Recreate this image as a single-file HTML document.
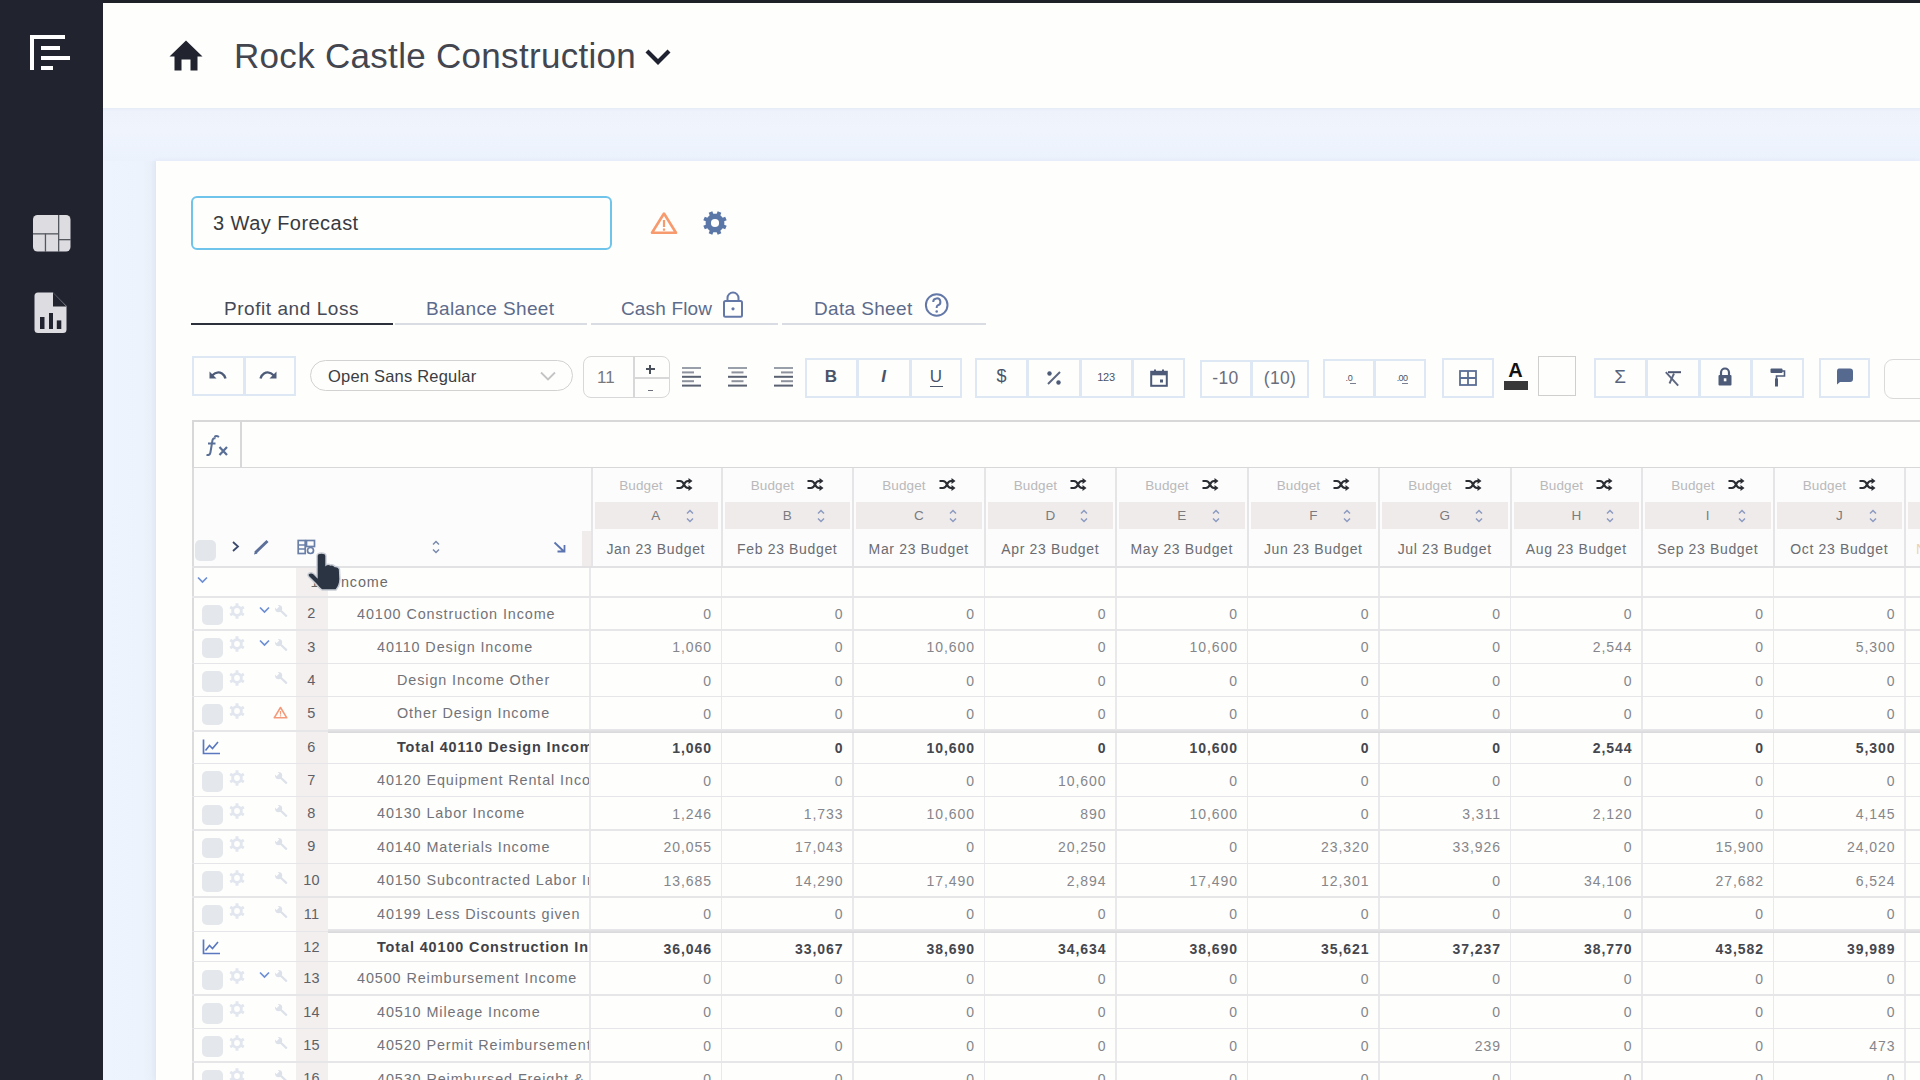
<!DOCTYPE html>
<html><head><meta charset="utf-8"><style>
html,body{margin:0;padding:0;}
body{width:1920px;height:1080px;overflow:hidden;position:relative;background:#fefefd;font-family:"Liberation Sans", sans-serif;}
div{box-sizing:border-box;}
</style></head><body>
<div style="position:absolute;left:0px;top:0px;width:1920px;height:1080px;background:#fefefd"></div><div style="position:absolute;left:103px;top:108px;width:1817px;height:53px;background:linear-gradient(#e6ecf6 0,#edf2fb 3px,#eff4fd 40%,#ecf2fc 100%)"></div><div style="position:absolute;left:103px;top:161px;width:53px;height:919px;background:linear-gradient(90deg,#eef4fd 0,#edf3fc 75%,#e8eef8 100%)"></div><div style="position:absolute;left:103px;top:3px;width:1817px;height:105px;background:#fefefd"></div><div style="position:absolute;left:0px;top:0px;width:1920px;height:3px;background:#1e2127"></div><div style="position:absolute;left:0px;top:0px;width:103px;height:1080px;background:#21232f"></div><div style="position:absolute;left:30px;top:35px;width:4px;height:35px;background:#fff"></div><div style="position:absolute;left:30px;top:35px;width:35px;height:4px;background:#fff"></div><div style="position:absolute;left:41px;top:46px;width:19px;height:4px;background:#fff"></div><div style="position:absolute;left:41px;top:56px;width:29px;height:4px;background:#fff"></div><div style="position:absolute;left:41px;top:66px;width:12px;height:4px;background:#fff"></div><svg style="position:absolute;left:33px;top:215px" width="38" height="37" viewBox="0 0 38 37"><rect x="0" y="0" width="37.5" height="36.5" rx="4.5" fill="#dcdce1"/><rect x="25" y="0" width="1.3" height="37" fill="#55575f"/><rect x="0" y="18.2" width="25.5" height="1.3" fill="#55575f"/><rect x="25.5" y="24" width="13" height="1.3" fill="#55575f"/><rect x="11.8" y="18.5" width="1.3" height="19" fill="#55575f"/></svg><svg style="position:absolute;left:34px;top:292px" width="34" height="42" viewBox="0 0 34 42"><path d="M4 0.5 H19 L32.5 14 V37.5 Q32.5 41 29 41 H4 Q0.5 41 0.5 37.5 V4 Q0.5 0.5 4 0.5Z" fill="#dcdce1"/><path d="M19 0.5 V14.5 H32.5Z" fill="#21232f"/><rect x="6" y="25" width="4.5" height="12" fill="#21232f"/><rect x="15" y="21" width="4" height="16" fill="#21232f"/><rect x="22.8" y="28.4" width="4.5" height="8.6" fill="#21232f"/></svg><svg style="position:absolute;left:169px;top:40px" width="34" height="31" viewBox="0 0 34 31"><path d="M17 0.5 L33.5 16.5 H28.5 V30.5 H21.5 V19.5 H12.5 V30.5 H5.5 V16.5 H0.5Z" fill="#21232f"/></svg><div style="position:absolute;top:35.37px;font-size:35px;line-height:42.0px;color:#43464f;font-weight:400;letter-spacing:0.3px;white-space:nowrap;left:234px;">Rock Castle Construction</div><svg style="position:absolute;left:644px;top:48px" width="28" height="18" viewBox="0 0 28 18"><path d="M3 3 L14 14 L25 3" fill="none" stroke="#1f2230" stroke-width="4.2"/></svg><div style="position:absolute;left:156px;top:161px;width:1764px;height:919px;background:#fefefd;box-shadow:-1px 0 4px rgba(170,190,220,0.18)"></div><div style="position:absolute;left:191px;top:196px;width:421px;height:54px;border:2px solid #6fc4ec;border-radius:6px;background:#fefefd"></div><div style="position:absolute;top:210.67px;font-size:20px;line-height:24.0px;color:#383a40;font-weight:400;letter-spacing:0.45px;white-space:nowrap;left:213px;">3 Way Forecast</div><svg style="position:absolute;left:650px;top:211px" width="28" height="24" viewBox="0 0 28 24"><path d="M14 2.5 L26 21.8 H2Z" fill="none" stroke="#f79a6e" stroke-width="2.6" stroke-linejoin="round"/><rect x="12.9" y="9" width="2.2" height="7" fill="#f79a6e"/><rect x="12.9" y="17.5" width="2.2" height="2.2" fill="#f79a6e"/></svg><svg style="position:absolute;left:702.5px;top:210.5px" width="24" height="24" viewBox="0 0 24 24"><path d="M21.36 12.00 L21.21 13.68 L23.69 14.71 L22.18 18.35 L19.70 17.32 L18.62 18.62 L17.32 19.70 L18.35 22.18 L14.71 23.69 L13.68 21.21 L12.00 21.36 L10.32 21.21 L9.29 23.69 L5.65 22.18 L6.68 19.70 L5.38 18.62 L4.30 17.32 L1.82 18.35 L0.31 14.71 L2.79 13.68 L2.64 12.00 L2.79 10.32 L0.31 9.29 L1.82 5.65 L4.30 6.68 L5.38 5.38 L6.68 4.30 L5.65 1.82 L9.29 0.31 L10.32 2.79 L12.00 2.64 L13.68 2.79 L14.71 0.31 L18.35 1.82 L17.32 4.30 L18.62 5.38 L19.70 6.68 L22.18 5.65 L23.69 9.29 L21.21 10.32Z" fill="#5b77a8"/><circle cx="12.0" cy="12.0" r="4.08" fill="#fefefd"/></svg><div style="position:absolute;top:298.22px;font-size:19px;line-height:22.8px;color:#474a55;font-weight:400;letter-spacing:0.55px;white-space:nowrap;left:224px;">Profit and Loss</div><div style="position:absolute;top:298.22px;font-size:19px;line-height:22.8px;color:#5d6b8b;font-weight:400;letter-spacing:0.37px;white-space:nowrap;left:426px;">Balance Sheet</div><div style="position:absolute;top:298.22px;font-size:19px;line-height:22.8px;color:#5d6b8b;font-weight:400;letter-spacing:0.15px;white-space:nowrap;left:621px;">Cash Flow</div><div style="position:absolute;top:298.22px;font-size:19px;line-height:22.8px;color:#5d6b8b;font-weight:400;letter-spacing:0.35px;white-space:nowrap;left:814px;">Data Sheet</div><div style="position:absolute;left:191px;top:322.5px;width:202px;height:2.2px;background:#2c303b"></div><div style="position:absolute;left:395px;top:323px;width:192px;height:1.5px;background:#d9dce2"></div><div style="position:absolute;left:591px;top:323px;width:187px;height:1.5px;background:#d9dce2"></div><div style="position:absolute;left:782px;top:323px;width:204px;height:1.5px;background:#d9dce2"></div><svg style="position:absolute;left:722px;top:291px" width="22" height="27" viewBox="0 0 22 27"><path d="M5.5 10 V7 A5.5 5.5 0 0 1 16.5 7 V10" fill="none" stroke="#6478a8" stroke-width="2"/><rect x="2" y="10" width="18" height="15.8" rx="1.5" fill="none" stroke="#6478a8" stroke-width="2"/><circle cx="11" cy="17.8" r="1.6" fill="#6478a8"/></svg><svg style="position:absolute;left:924px;top:292px" width="26" height="26" viewBox="0 0 26 26"><circle cx="12.7" cy="13" r="10.8" fill="none" stroke="#6478a8" stroke-width="2"/><path d="M9.2 10 A3.6 3.6 0 1 1 13.5 13.5 Q12.7 14 12.7 15.5 V16" fill="none" stroke="#6478a8" stroke-width="2"/><circle cx="12.7" cy="19.5" r="1.3" fill="#6478a8"/></svg><div style="position:absolute;left:192px;top:356px;width:104px;height:40px;border:2px solid #dee7f4;background:#fefefd"></div><div style="position:absolute;left:242.5px;top:356px;width:3px;height:40px;background:#dee7f4"></div><svg style="position:absolute;left:206px;top:366px" width="22" height="20" viewBox="0 0 22 20"><path d="M6 9.5 Q11 4.5 16 7.5 Q18.5 9 19.5 12.5" fill="none" stroke="#4d5b78" stroke-width="2.4"/><path d="M3.5 5.5 V12.5 H10.5Z" fill="#4d5b78"/></svg><svg style="position:absolute;left:258px;top:366px" width="22" height="20" viewBox="0 0 22 20"><path d="M16 9.5 Q11 4.5 6 7.5 Q3.5 9 2.5 12.5" fill="none" stroke="#4d5b78" stroke-width="2.4"/><path d="M18.5 5.5 V12.5 H11.5Z" fill="#4d5b78"/></svg><div style="position:absolute;left:310px;top:359.5px;width:263px;height:31.5px;border:1.6px solid #d2d2d2;border-radius:16px;background:#fefefd"></div><div style="position:absolute;top:366.98px;font-size:16.5px;line-height:19.8px;color:#3b3d42;font-weight:400;letter-spacing:0.2px;white-space:nowrap;left:328px;">Open Sans Regular</div><svg style="position:absolute;left:539px;top:370px" width="18" height="12" viewBox="0 0 18 12"><path d="M2 2.5 L9 9.5 L16 2.5" fill="none" stroke="#c4c4c4" stroke-width="1.8"/></svg><div style="position:absolute;left:582.5px;top:356px;width:87px;height:41.5px;border:1.6px solid #d8d8d8;border-radius:8px;background:#fefefd"></div><div style="position:absolute;left:633px;top:356px;width:1.6px;height:41.5px;background:#d8d8d8"></div><div style="position:absolute;left:633.5px;top:377px;width:36px;height:1.6px;background:#d8d8d8"></div><div style="position:absolute;top:367.71px;font-size:17px;line-height:20.4px;color:#77787c;font-weight:400;letter-spacing:0px;white-space:nowrap;left:597px;">11</div><div style="position:absolute;left:645.5px;top:368.2px;width:9px;height:1.6px;background:#4a4f5c"></div><div style="position:absolute;left:649.2px;top:364.5px;width:1.6px;height:9px;background:#4a4f5c"></div><div style="position:absolute;left:647.5px;top:389.5px;width:5px;height:1.6px;background:#6a6f7a"></div><svg style="position:absolute;left:682px;top:366.5px" width="19" height="20" viewBox="0 0 19 20"><rect x="0" y="0.0" width="19" height="2" fill="#9aa0aa"/><rect x="0" y="4.4" width="12" height="2" fill="#8d929c"/><rect x="0" y="8.8" width="19" height="2" fill="#5a6170"/><rect x="0" y="13.200000000000001" width="12" height="2" fill="#8d929c"/><rect x="0" y="17.6" width="19" height="2" fill="#5a6170"/></svg><svg style="position:absolute;left:727.5px;top:366.5px" width="19" height="20" viewBox="0 0 19 20"><rect x="0.0" y="0.0" width="19" height="2" fill="#9aa0aa"/><rect x="3.5" y="4.4" width="12" height="2" fill="#8d929c"/><rect x="0.0" y="8.8" width="19" height="2" fill="#5a6170"/><rect x="3.5" y="13.200000000000001" width="12" height="2" fill="#8d929c"/><rect x="0.0" y="17.6" width="19" height="2" fill="#5a6170"/></svg><svg style="position:absolute;left:773.5px;top:366.5px" width="19" height="20" viewBox="0 0 19 20"><rect x="0" y="0.0" width="19" height="2" fill="#9aa0aa"/><rect x="7" y="4.4" width="12" height="2" fill="#8d929c"/><rect x="0" y="8.8" width="19" height="2" fill="#5a6170"/><rect x="7" y="13.200000000000001" width="12" height="2" fill="#8d929c"/><rect x="0" y="17.6" width="19" height="2" fill="#5a6170"/></svg><div style="position:absolute;left:805px;top:358px;width:157px;height:39.5px;border:2px solid #dee7f4;background:#fefefd"></div><div style="position:absolute;left:855.5px;top:358px;width:3px;height:39.5px;background:#dee7f4"></div><div style="position:absolute;left:908.5px;top:358px;width:3px;height:39.5px;background:#dee7f4"></div><div style="position:absolute;top:366.51px;font-size:17px;line-height:20.4px;color:#4a5468;font-weight:700;letter-spacing:0px;white-space:nowrap;left:821.0px;width:20px;text-align:center;">B</div><div style="position:absolute;top:366.51px;font-size:17px;line-height:20.4px;color:#4a5468;font-weight:700;letter-spacing:0px;white-space:nowrap;left:873.5px;width:20px;text-align:center;font-family:"Liberation Serif",serif;"><i>I</i></div><div style="position:absolute;top:366.51px;font-size:17px;line-height:20.4px;color:#4a5468;font-weight:400;letter-spacing:0px;white-space:nowrap;left:926.0px;width:20px;text-align:center;">U</div><div style="position:absolute;left:929.5px;top:385.5px;width:13px;height:1.6px;background:#4a5468"></div><div style="position:absolute;left:975px;top:358px;width:210px;height:39.5px;border:2px solid #dee7f4;background:#fefefd"></div><div style="position:absolute;left:1025.5px;top:358px;width:3px;height:39.5px;background:#dee7f4"></div><div style="position:absolute;left:1078.5px;top:358px;width:3px;height:39.5px;background:#dee7f4"></div><div style="position:absolute;left:1131.2px;top:358px;width:3px;height:39.5px;background:#dee7f4"></div><div style="position:absolute;top:366.46px;font-size:18px;line-height:21.6px;color:#4a5468;font-weight:400;letter-spacing:0px;white-space:nowrap;left:991.5px;width:20px;text-align:center;">$</div><svg style="position:absolute;left:1045px;top:369px" width="18" height="18" viewBox="0 0 18 18"><path d="M3 15 L15 3" stroke="#5c6680" stroke-width="2"/><circle cx="4.5" cy="4.5" r="2.2" fill="#4d5b78"/><circle cx="13.5" cy="13.5" r="2.2" fill="#4d5b78"/></svg><div style="position:absolute;top:371.09px;font-size:11px;line-height:13.2px;color:#4a5468;font-weight:400;letter-spacing:-0.3px;white-space:nowrap;left:1091.0px;width:30px;text-align:center;">123</div><svg style="position:absolute;left:1150px;top:369px" width="18" height="18" viewBox="0 0 18 18"><rect x="1.2" y="2.8" width="15.6" height="14" fill="none" stroke="#4d5b78" stroke-width="2"/><rect x="1.2" y="2.8" width="15.6" height="3.5" fill="#4d5b78"/><rect x="4" y="0.5" width="2" height="3" fill="#4d5b78"/><rect x="12" y="0.5" width="2" height="3" fill="#4d5b78"/><rect x="10" y="10.5" width="3" height="3" fill="#4d5b78"/></svg><div style="position:absolute;left:1200px;top:359.5px;width:109px;height:38.0px;border:2px solid #dee7f4;background:#fefefd"></div><div style="position:absolute;left:1250.0px;top:359.5px;width:3px;height:38.0px;background:#dee7f4"></div><div style="position:absolute;top:367.64px;font-size:17.5px;line-height:21.0px;color:#6a6e7c;font-weight:400;letter-spacing:0.4px;white-space:nowrap;left:1205.5px;width:40px;text-align:center;">-10</div><div style="position:absolute;top:367.64px;font-size:17.5px;line-height:21.0px;color:#6a6e7c;font-weight:400;letter-spacing:0.3px;white-space:nowrap;left:1258.0px;width:44px;text-align:center;">(10)</div><div style="position:absolute;left:1323px;top:358.5px;width:103px;height:39.0px;border:2px solid #dee7f4;background:#fefefd"></div><div style="position:absolute;left:1373.1px;top:358.5px;width:3px;height:39.0px;background:#dee7f4"></div><div style="position:absolute;top:373.48px;font-size:9px;line-height:10.8px;color:#4a5468;font-weight:400;letter-spacing:-0.3px;white-space:nowrap;left:1341.0px;width:16px;text-align:center;">.0</div><div style="position:absolute;left:1350px;top:383px;width:6px;height:1.2px;background:#7a8090"></div><div style="position:absolute;top:373.48px;font-size:9px;line-height:10.8px;color:#4a5468;font-weight:400;letter-spacing:-0.6px;white-space:nowrap;left:1393.0px;width:18px;text-align:center;">.00</div><div style="position:absolute;left:1402px;top:383px;width:6px;height:1.2px;background:#7a8090"></div><div style="position:absolute;left:1442px;top:358px;width:52px;height:39.5px;border:2px solid #dee7f4;background:#fefefd"></div><svg style="position:absolute;left:1459px;top:370px" width="18" height="16" viewBox="0 0 18 16"><rect x="1" y="1" width="16" height="14" fill="none" stroke="#5a6f96" stroke-width="1.8"/><path d="M9 1 V15 M1 8 H17" stroke="#5a6f96" stroke-width="1.8"/></svg><div style="position:absolute;top:357.77px;font-size:20px;line-height:24.0px;color:#111;font-weight:700;letter-spacing:0px;white-space:nowrap;left:1503.5px;width:24px;text-align:center;">A</div><div style="position:absolute;left:1503.6px;top:381.3px;width:24.7px;height:8.4px;background:#383838"></div><div style="position:absolute;left:1538px;top:356.3px;width:38px;height:39.3px;border:1.6px solid #cfcfcf;background:#fefefd"></div><div style="position:absolute;left:1594px;top:358px;width:209.5px;height:39.5px;border:2px solid #dee7f4;background:#fefefd"></div><div style="position:absolute;left:1644.5px;top:358px;width:3px;height:39.5px;background:#dee7f4"></div><div style="position:absolute;left:1697.5px;top:358px;width:3px;height:39.5px;background:#dee7f4"></div><div style="position:absolute;left:1749.9px;top:358px;width:3px;height:39.5px;background:#dee7f4"></div><div style="position:absolute;top:366.02px;font-size:19px;line-height:22.8px;color:#58647e;font-weight:400;letter-spacing:0px;white-space:nowrap;left:1608.0px;width:24px;text-align:center;">&Sigma;</div><svg style="position:absolute;left:1664px;top:370px" width="18" height="18" viewBox="0 0 18 18"><path d="M4 2.2 H17" fill="none" stroke="#4d5670" stroke-width="2"/><path d="M1.8 2.2 L14.2 15.6" fill="none" stroke="#5c6680" stroke-width="1.9"/><path d="M10 3.5 L5.5 13.5" fill="none" stroke="#5c6680" stroke-width="1.9"/></svg><svg style="position:absolute;left:1716px;top:366px" width="18" height="22" viewBox="0 0 18 22"><path d="M5 9 V6.5 A4 4 0 0 1 13 6.5 V9" fill="none" stroke="#4d5b78" stroke-width="2.2"/><rect x="2.5" y="9" width="13" height="10.5" rx="1" fill="#4d5b78"/><rect x="7.8" y="12.3" width="2.6" height="3" fill="#fefefd"/></svg><svg style="position:absolute;left:1769px;top:367px" width="18" height="22" viewBox="0 0 18 22"><rect x="1.5" y="1.5" width="12" height="4.5" rx="1" fill="#4d5b78"/><path d="M13 4 H15.5 V9 H7.5 V12" fill="none" stroke="#4d5b78" stroke-width="1.6"/><rect x="6" y="11.5" width="3" height="8" fill="#4d5b78"/></svg><div style="position:absolute;left:1819px;top:358px;width:51px;height:39.5px;border:2px solid #dee7f4;background:#fefefd"></div><svg style="position:absolute;left:1835px;top:367px" width="20" height="20" viewBox="0 0 20 20"><path d="M4 1.5 H15 Q18 1.5 18 4.5 V12 Q18 15 15 15 H5 L2 17.5 V4.5 Q2 1.5 4 1.5Z" fill="#56698f"/></svg><div style="position:absolute;left:1884px;top:358.5px;width:80px;height:40.5px;border:1.6px solid #dadada;border-radius:9px;background:#fefefd"></div><div style="position:absolute;left:191.5px;top:419.5px;width:1740px;height:49px;border:2px solid #d8d8d8;border-right:none;background:#fefefd"></div><div style="position:absolute;left:240px;top:419.5px;width:2px;height:49px;background:#d8d8d8"></div><svg style="position:absolute;left:203px;top:432px" width="28" height="26" viewBox="0 0 28 26"><path d="M12.5 6.5 Q10.5 5.5 9.5 8 L7.5 20 Q7 23.5 3.5 23" fill="none" stroke="#5a6f96" stroke-width="2"/><path d="M11.5 5 Q13 3 16 5" fill="none" stroke="#5a6f96" stroke-width="2"/><path d="M5 11.5 H12.5" stroke="#5a6f96" stroke-width="2"/><path d="M16.5 15 L24 23 M24 15 L16.5 23" stroke="#5a6f96" stroke-width="2.2"/></svg><div style="position:absolute;left:193px;top:468px;width:1727px;height:99px;background:#fcfcfc"></div><div style="position:absolute;left:192px;top:468px;width:1.6px;height:612px;background:#dcdcdc"></div><div style="position:absolute;left:590.6px;top:468px;width:2px;height:99px;background:#e5e5e8"></div><div style="position:absolute;left:720.5px;top:468px;width:2px;height:99px;background:#e5e5e8"></div><div style="position:absolute;left:852.0px;top:468px;width:2px;height:99px;background:#e5e5e8"></div><div style="position:absolute;left:983.5px;top:468px;width:2px;height:99px;background:#e5e5e8"></div><div style="position:absolute;left:1115.0px;top:468px;width:2px;height:99px;background:#e5e5e8"></div><div style="position:absolute;left:1246.5px;top:468px;width:2px;height:99px;background:#e5e5e8"></div><div style="position:absolute;left:1378.0px;top:468px;width:2px;height:99px;background:#e5e5e8"></div><div style="position:absolute;left:1509.5px;top:468px;width:2px;height:99px;background:#e5e5e8"></div><div style="position:absolute;left:1641.0px;top:468px;width:2px;height:99px;background:#e5e5e8"></div><div style="position:absolute;left:1772.5px;top:468px;width:2px;height:99px;background:#e5e5e8"></div><div style="position:absolute;left:1904.0px;top:468px;width:2px;height:99px;background:#e5e5e8"></div><div style="position:absolute;left:594.6px;top:501.5px;width:123.89999999999998px;height:27.2px;background:#efebeb"></div><div style="position:absolute;top:477.72px;font-size:13.5px;line-height:16.2px;color:#b9b9bb;font-weight:400;letter-spacing:0.1px;white-space:nowrap;left:619.25px;">Budget</div><svg style="position:absolute;left:675.75px;top:477.5px" width="17" height="13" viewBox="0 0 17 13"><path d="M0.5 3 H4 Q6.5 3 8 6.5 Q9.5 10 12 10 H14" fill="none" stroke="#2a2d33" stroke-width="2"/><path d="M0.5 10 H4 Q6.5 10 8 6.5 Q9.5 3 12 3 H14" fill="none" stroke="#2a2d33" stroke-width="2"/><path d="M12.5 0 L16.5 3 L12.5 6Z M12.5 7 L16.5 10 L12.5 13Z" fill="#2a2d33"/></svg><div style="position:absolute;top:507.52px;font-size:13.5px;line-height:16.2px;color:#7b7b7e;font-weight:400;letter-spacing:0px;white-space:nowrap;left:645.75px;width:20px;text-align:center;">A</div><svg style="position:absolute;left:685.75px;top:508.6px" width="8" height="14" viewBox="0 0 8 14"><path d="M1 4.5 L4 1.5 L7 4.5 M1 9.5 L4 12.5 L7 9.5" fill="none" stroke="#8b9bc0" stroke-width="1.5"/></svg><div style="position:absolute;top:541.05px;font-size:14px;line-height:16.8px;color:#6a6c72;font-weight:400;letter-spacing:0.65px;white-space:nowrap;left:592.75px;width:126px;text-align:center;">Jan 23 Budget</div><div style="position:absolute;left:724.5px;top:501.5px;width:125.5px;height:27.2px;background:#efebeb"></div><div style="position:absolute;top:477.72px;font-size:13.5px;line-height:16.2px;color:#b9b9bb;font-weight:400;letter-spacing:0.1px;white-space:nowrap;left:750.75px;">Budget</div><svg style="position:absolute;left:807.25px;top:477.5px" width="17" height="13" viewBox="0 0 17 13"><path d="M0.5 3 H4 Q6.5 3 8 6.5 Q9.5 10 12 10 H14" fill="none" stroke="#2a2d33" stroke-width="2"/><path d="M0.5 10 H4 Q6.5 10 8 6.5 Q9.5 3 12 3 H14" fill="none" stroke="#2a2d33" stroke-width="2"/><path d="M12.5 0 L16.5 3 L12.5 6Z M12.5 7 L16.5 10 L12.5 13Z" fill="#2a2d33"/></svg><div style="position:absolute;top:507.52px;font-size:13.5px;line-height:16.2px;color:#7b7b7e;font-weight:400;letter-spacing:0px;white-space:nowrap;left:777.25px;width:20px;text-align:center;">B</div><svg style="position:absolute;left:817.25px;top:508.6px" width="8" height="14" viewBox="0 0 8 14"><path d="M1 4.5 L4 1.5 L7 4.5 M1 9.5 L4 12.5 L7 9.5" fill="none" stroke="#8b9bc0" stroke-width="1.5"/></svg><div style="position:absolute;top:541.05px;font-size:14px;line-height:16.8px;color:#6a6c72;font-weight:400;letter-spacing:0.65px;white-space:nowrap;left:724.25px;width:126px;text-align:center;">Feb 23 Budget</div><div style="position:absolute;left:856.0px;top:501.5px;width:125.5px;height:27.2px;background:#efebeb"></div><div style="position:absolute;top:477.72px;font-size:13.5px;line-height:16.2px;color:#b9b9bb;font-weight:400;letter-spacing:0.1px;white-space:nowrap;left:882.25px;">Budget</div><svg style="position:absolute;left:938.75px;top:477.5px" width="17" height="13" viewBox="0 0 17 13"><path d="M0.5 3 H4 Q6.5 3 8 6.5 Q9.5 10 12 10 H14" fill="none" stroke="#2a2d33" stroke-width="2"/><path d="M0.5 10 H4 Q6.5 10 8 6.5 Q9.5 3 12 3 H14" fill="none" stroke="#2a2d33" stroke-width="2"/><path d="M12.5 0 L16.5 3 L12.5 6Z M12.5 7 L16.5 10 L12.5 13Z" fill="#2a2d33"/></svg><div style="position:absolute;top:507.52px;font-size:13.5px;line-height:16.2px;color:#7b7b7e;font-weight:400;letter-spacing:0px;white-space:nowrap;left:908.75px;width:20px;text-align:center;">C</div><svg style="position:absolute;left:948.75px;top:508.6px" width="8" height="14" viewBox="0 0 8 14"><path d="M1 4.5 L4 1.5 L7 4.5 M1 9.5 L4 12.5 L7 9.5" fill="none" stroke="#8b9bc0" stroke-width="1.5"/></svg><div style="position:absolute;top:541.05px;font-size:14px;line-height:16.8px;color:#6a6c72;font-weight:400;letter-spacing:0.65px;white-space:nowrap;left:855.75px;width:126px;text-align:center;">Mar 23 Budget</div><div style="position:absolute;left:987.5px;top:501.5px;width:125.5px;height:27.2px;background:#efebeb"></div><div style="position:absolute;top:477.72px;font-size:13.5px;line-height:16.2px;color:#b9b9bb;font-weight:400;letter-spacing:0.1px;white-space:nowrap;left:1013.75px;">Budget</div><svg style="position:absolute;left:1070.25px;top:477.5px" width="17" height="13" viewBox="0 0 17 13"><path d="M0.5 3 H4 Q6.5 3 8 6.5 Q9.5 10 12 10 H14" fill="none" stroke="#2a2d33" stroke-width="2"/><path d="M0.5 10 H4 Q6.5 10 8 6.5 Q9.5 3 12 3 H14" fill="none" stroke="#2a2d33" stroke-width="2"/><path d="M12.5 0 L16.5 3 L12.5 6Z M12.5 7 L16.5 10 L12.5 13Z" fill="#2a2d33"/></svg><div style="position:absolute;top:507.52px;font-size:13.5px;line-height:16.2px;color:#7b7b7e;font-weight:400;letter-spacing:0px;white-space:nowrap;left:1040.25px;width:20px;text-align:center;">D</div><svg style="position:absolute;left:1080.25px;top:508.6px" width="8" height="14" viewBox="0 0 8 14"><path d="M1 4.5 L4 1.5 L7 4.5 M1 9.5 L4 12.5 L7 9.5" fill="none" stroke="#8b9bc0" stroke-width="1.5"/></svg><div style="position:absolute;top:541.05px;font-size:14px;line-height:16.8px;color:#6a6c72;font-weight:400;letter-spacing:0.65px;white-space:nowrap;left:987.25px;width:126px;text-align:center;">Apr 23 Budget</div><div style="position:absolute;left:1119.0px;top:501.5px;width:125.5px;height:27.2px;background:#efebeb"></div><div style="position:absolute;top:477.72px;font-size:13.5px;line-height:16.2px;color:#b9b9bb;font-weight:400;letter-spacing:0.1px;white-space:nowrap;left:1145.25px;">Budget</div><svg style="position:absolute;left:1201.75px;top:477.5px" width="17" height="13" viewBox="0 0 17 13"><path d="M0.5 3 H4 Q6.5 3 8 6.5 Q9.5 10 12 10 H14" fill="none" stroke="#2a2d33" stroke-width="2"/><path d="M0.5 10 H4 Q6.5 10 8 6.5 Q9.5 3 12 3 H14" fill="none" stroke="#2a2d33" stroke-width="2"/><path d="M12.5 0 L16.5 3 L12.5 6Z M12.5 7 L16.5 10 L12.5 13Z" fill="#2a2d33"/></svg><div style="position:absolute;top:507.52px;font-size:13.5px;line-height:16.2px;color:#7b7b7e;font-weight:400;letter-spacing:0px;white-space:nowrap;left:1171.75px;width:20px;text-align:center;">E</div><svg style="position:absolute;left:1211.75px;top:508.6px" width="8" height="14" viewBox="0 0 8 14"><path d="M1 4.5 L4 1.5 L7 4.5 M1 9.5 L4 12.5 L7 9.5" fill="none" stroke="#8b9bc0" stroke-width="1.5"/></svg><div style="position:absolute;top:541.05px;font-size:14px;line-height:16.8px;color:#6a6c72;font-weight:400;letter-spacing:0.65px;white-space:nowrap;left:1118.75px;width:126px;text-align:center;">May 23 Budget</div><div style="position:absolute;left:1250.5px;top:501.5px;width:125.5px;height:27.2px;background:#efebeb"></div><div style="position:absolute;top:477.72px;font-size:13.5px;line-height:16.2px;color:#b9b9bb;font-weight:400;letter-spacing:0.1px;white-space:nowrap;left:1276.75px;">Budget</div><svg style="position:absolute;left:1333.25px;top:477.5px" width="17" height="13" viewBox="0 0 17 13"><path d="M0.5 3 H4 Q6.5 3 8 6.5 Q9.5 10 12 10 H14" fill="none" stroke="#2a2d33" stroke-width="2"/><path d="M0.5 10 H4 Q6.5 10 8 6.5 Q9.5 3 12 3 H14" fill="none" stroke="#2a2d33" stroke-width="2"/><path d="M12.5 0 L16.5 3 L12.5 6Z M12.5 7 L16.5 10 L12.5 13Z" fill="#2a2d33"/></svg><div style="position:absolute;top:507.52px;font-size:13.5px;line-height:16.2px;color:#7b7b7e;font-weight:400;letter-spacing:0px;white-space:nowrap;left:1303.25px;width:20px;text-align:center;">F</div><svg style="position:absolute;left:1343.25px;top:508.6px" width="8" height="14" viewBox="0 0 8 14"><path d="M1 4.5 L4 1.5 L7 4.5 M1 9.5 L4 12.5 L7 9.5" fill="none" stroke="#8b9bc0" stroke-width="1.5"/></svg><div style="position:absolute;top:541.05px;font-size:14px;line-height:16.8px;color:#6a6c72;font-weight:400;letter-spacing:0.65px;white-space:nowrap;left:1250.25px;width:126px;text-align:center;">Jun 23 Budget</div><div style="position:absolute;left:1382.0px;top:501.5px;width:125.5px;height:27.2px;background:#efebeb"></div><div style="position:absolute;top:477.72px;font-size:13.5px;line-height:16.2px;color:#b9b9bb;font-weight:400;letter-spacing:0.1px;white-space:nowrap;left:1408.25px;">Budget</div><svg style="position:absolute;left:1464.75px;top:477.5px" width="17" height="13" viewBox="0 0 17 13"><path d="M0.5 3 H4 Q6.5 3 8 6.5 Q9.5 10 12 10 H14" fill="none" stroke="#2a2d33" stroke-width="2"/><path d="M0.5 10 H4 Q6.5 10 8 6.5 Q9.5 3 12 3 H14" fill="none" stroke="#2a2d33" stroke-width="2"/><path d="M12.5 0 L16.5 3 L12.5 6Z M12.5 7 L16.5 10 L12.5 13Z" fill="#2a2d33"/></svg><div style="position:absolute;top:507.52px;font-size:13.5px;line-height:16.2px;color:#7b7b7e;font-weight:400;letter-spacing:0px;white-space:nowrap;left:1434.75px;width:20px;text-align:center;">G</div><svg style="position:absolute;left:1474.75px;top:508.6px" width="8" height="14" viewBox="0 0 8 14"><path d="M1 4.5 L4 1.5 L7 4.5 M1 9.5 L4 12.5 L7 9.5" fill="none" stroke="#8b9bc0" stroke-width="1.5"/></svg><div style="position:absolute;top:541.05px;font-size:14px;line-height:16.8px;color:#6a6c72;font-weight:400;letter-spacing:0.65px;white-space:nowrap;left:1381.75px;width:126px;text-align:center;">Jul 23 Budget</div><div style="position:absolute;left:1513.5px;top:501.5px;width:125.5px;height:27.2px;background:#efebeb"></div><div style="position:absolute;top:477.72px;font-size:13.5px;line-height:16.2px;color:#b9b9bb;font-weight:400;letter-spacing:0.1px;white-space:nowrap;left:1539.75px;">Budget</div><svg style="position:absolute;left:1596.25px;top:477.5px" width="17" height="13" viewBox="0 0 17 13"><path d="M0.5 3 H4 Q6.5 3 8 6.5 Q9.5 10 12 10 H14" fill="none" stroke="#2a2d33" stroke-width="2"/><path d="M0.5 10 H4 Q6.5 10 8 6.5 Q9.5 3 12 3 H14" fill="none" stroke="#2a2d33" stroke-width="2"/><path d="M12.5 0 L16.5 3 L12.5 6Z M12.5 7 L16.5 10 L12.5 13Z" fill="#2a2d33"/></svg><div style="position:absolute;top:507.52px;font-size:13.5px;line-height:16.2px;color:#7b7b7e;font-weight:400;letter-spacing:0px;white-space:nowrap;left:1566.25px;width:20px;text-align:center;">H</div><svg style="position:absolute;left:1606.25px;top:508.6px" width="8" height="14" viewBox="0 0 8 14"><path d="M1 4.5 L4 1.5 L7 4.5 M1 9.5 L4 12.5 L7 9.5" fill="none" stroke="#8b9bc0" stroke-width="1.5"/></svg><div style="position:absolute;top:541.05px;font-size:14px;line-height:16.8px;color:#6a6c72;font-weight:400;letter-spacing:0.65px;white-space:nowrap;left:1513.25px;width:126px;text-align:center;">Aug 23 Budget</div><div style="position:absolute;left:1645.0px;top:501.5px;width:125.5px;height:27.2px;background:#efebeb"></div><div style="position:absolute;top:477.72px;font-size:13.5px;line-height:16.2px;color:#b9b9bb;font-weight:400;letter-spacing:0.1px;white-space:nowrap;left:1671.25px;">Budget</div><svg style="position:absolute;left:1727.75px;top:477.5px" width="17" height="13" viewBox="0 0 17 13"><path d="M0.5 3 H4 Q6.5 3 8 6.5 Q9.5 10 12 10 H14" fill="none" stroke="#2a2d33" stroke-width="2"/><path d="M0.5 10 H4 Q6.5 10 8 6.5 Q9.5 3 12 3 H14" fill="none" stroke="#2a2d33" stroke-width="2"/><path d="M12.5 0 L16.5 3 L12.5 6Z M12.5 7 L16.5 10 L12.5 13Z" fill="#2a2d33"/></svg><div style="position:absolute;top:507.52px;font-size:13.5px;line-height:16.2px;color:#7b7b7e;font-weight:400;letter-spacing:0px;white-space:nowrap;left:1697.75px;width:20px;text-align:center;">I</div><svg style="position:absolute;left:1737.75px;top:508.6px" width="8" height="14" viewBox="0 0 8 14"><path d="M1 4.5 L4 1.5 L7 4.5 M1 9.5 L4 12.5 L7 9.5" fill="none" stroke="#8b9bc0" stroke-width="1.5"/></svg><div style="position:absolute;top:541.05px;font-size:14px;line-height:16.8px;color:#6a6c72;font-weight:400;letter-spacing:0.65px;white-space:nowrap;left:1644.75px;width:126px;text-align:center;">Sep 23 Budget</div><div style="position:absolute;left:1776.5px;top:501.5px;width:125.5px;height:27.2px;background:#efebeb"></div><div style="position:absolute;top:477.72px;font-size:13.5px;line-height:16.2px;color:#b9b9bb;font-weight:400;letter-spacing:0.1px;white-space:nowrap;left:1802.75px;">Budget</div><svg style="position:absolute;left:1859.25px;top:477.5px" width="17" height="13" viewBox="0 0 17 13"><path d="M0.5 3 H4 Q6.5 3 8 6.5 Q9.5 10 12 10 H14" fill="none" stroke="#2a2d33" stroke-width="2"/><path d="M0.5 10 H4 Q6.5 10 8 6.5 Q9.5 3 12 3 H14" fill="none" stroke="#2a2d33" stroke-width="2"/><path d="M12.5 0 L16.5 3 L12.5 6Z M12.5 7 L16.5 10 L12.5 13Z" fill="#2a2d33"/></svg><div style="position:absolute;top:507.52px;font-size:13.5px;line-height:16.2px;color:#7b7b7e;font-weight:400;letter-spacing:0px;white-space:nowrap;left:1829.25px;width:20px;text-align:center;">J</div><svg style="position:absolute;left:1869.25px;top:508.6px" width="8" height="14" viewBox="0 0 8 14"><path d="M1 4.5 L4 1.5 L7 4.5 M1 9.5 L4 12.5 L7 9.5" fill="none" stroke="#8b9bc0" stroke-width="1.5"/></svg><div style="position:absolute;top:541.05px;font-size:14px;line-height:16.8px;color:#6a6c72;font-weight:400;letter-spacing:0.65px;white-space:nowrap;left:1776.25px;width:126px;text-align:center;">Oct 23 Budget</div><div style="position:absolute;left:1908.0px;top:501.5px;width:30px;height:27.2px;background:#efebeb"></div><div style="position:absolute;top:541.05px;font-size:14px;line-height:16.8px;color:#ead2b0;font-weight:400;letter-spacing:0.6px;white-space:nowrap;left:1916px;">N</div><div style="position:absolute;left:195px;top:540px;width:20.5px;height:21px;background:#e3e6ea;border-radius:5px"></div><svg style="position:absolute;left:231px;top:541px" width="10" height="11" viewBox="0 0 10 11"><path d="M2 1 L7 5.5 L2 10" fill="none" stroke="#3b4a6b" stroke-width="1.8"/></svg><svg style="position:absolute;left:253px;top:539px" width="18" height="16" viewBox="0 0 18 16"><path d="M2.5 13.5 L14.5 2" stroke="#5b6f9a" stroke-width="3"/><path d="M1 15.5 L2 12 L4.5 14.5Z" fill="#5b6f9a"/></svg><svg style="position:absolute;left:297px;top:539px" width="20" height="16" viewBox="0 0 20 16"><rect x="1.2" y="1.5" width="7" height="13" fill="none" stroke="#6a7fa8" stroke-width="1.7"/><path d="M1.2 6 H8 M1.2 10 H8" stroke="#6a7fa8" stroke-width="1.5"/><rect x="9.5" y="1.5" width="8" height="6" fill="none" stroke="#6a7fa8" stroke-width="1.7"/><circle cx="13.5" cy="11.5" r="3" fill="none" stroke="#6a7fa8" stroke-width="1.7"/></svg><svg style="position:absolute;left:431.5px;top:539.5px" width="8" height="14" viewBox="0 0 8 14"><path d="M1 4.5 L4 1.5 L7 4.5 M1 9.5 L4 12.5 L7 9.5" fill="none" stroke="#7a8aad" stroke-width="1.5"/></svg><svg style="position:absolute;left:553px;top:541px" width="14" height="12" viewBox="0 0 14 12"><path d="M1.5 1.5 L11 10.5 M4.5 10.5 H11.5 V4" fill="none" stroke="#5b74b0" stroke-width="1.8"/></svg><div style="position:absolute;left:582px;top:531px;width:8.6px;height:35px;background:#f1ecec"></div><div style="position:absolute;left:192px;top:566.2px;width:1728px;height:1.6px;background:#e2e2e4"></div><div style="position:absolute;left:296px;top:567.8px;width:32px;height:513px;background:#f3efef"></div><svg style="position:absolute;left:197px;top:576px" width="11" height="8" viewBox="0 0 11 8"><path d="M1 1.5 L5.5 6 L10 1.5" fill="none" stroke="#6d8fd8" stroke-width="1.7"/></svg><div style="position:absolute;top:573.78px;font-size:14.5px;line-height:17.4px;color:#666;font-weight:400;letter-spacing:0px;white-space:nowrap;left:304.5px;width:20px;text-align:center;">1</div><div style="position:absolute;left:328px;top:567.8px;width:262px;height:29px;overflow:hidden"><div style="position:absolute;top:6.07px;font-size:14.4px;line-height:17.28px;color:#6b6b6b;font-weight:400;letter-spacing:0.9px;white-space:nowrap;left:8px;">Income</div></div><div style="position:absolute;left:202px;top:604.6999999999999px;width:20.5px;height:20.7px;background:#e4e7eb;border-radius:5px"></div><svg style="position:absolute;left:229px;top:603.1px" width="16" height="16" viewBox="0 0 16 16"><path d="M13.76 8.00 L13.55 9.55 L15.56 10.63 L14.06 13.23 L12.12 12.03 L10.88 12.99 L9.43 13.58 L9.50 15.86 L6.50 15.86 L6.57 13.58 L5.12 12.99 L3.88 12.03 L1.94 13.23 L0.44 10.63 L2.45 9.55 L2.24 8.00 L2.45 6.45 L0.44 5.37 L1.94 2.77 L3.88 3.97 L5.12 3.01 L6.57 2.42 L6.50 0.14 L9.50 0.14 L9.43 2.42 L10.88 3.01 L12.12 3.97 L14.06 2.77 L15.56 5.37 L13.55 6.45Z" fill="#e2e6ee"/><circle cx="8.0" cy="8.0" r="2.88" fill="#fefefd"/></svg><svg style="position:absolute;left:258.5px;top:605.9px" width="11" height="8" viewBox="0 0 11 8"><path d="M1 1.5 L5.5 6 L10 1.5" fill="none" stroke="#6d8fd8" stroke-width="1.7"/></svg><svg style="position:absolute;left:273.5px;top:604.4px" width="15" height="14" viewBox="0 0 15 14"><path d="M6 6 L12.2 11.8" stroke="#dde2ea" stroke-width="2.3" stroke-linecap="round"/><circle cx="4.6" cy="4.6" r="3.6" fill="#dde2ea"/><path d="M0 2.6 L2.6 0 L5.2 2.6 L2.6 5.2Z" fill="#fefefd"/></svg><div style="position:absolute;top:605.48px;font-size:14.5px;line-height:17.4px;color:#5e6066;font-weight:400;letter-spacing:0.3px;white-space:nowrap;left:299.5px;width:24px;text-align:center;">2</div><div style="position:absolute;left:328px;top:596.9px;width:262px;height:33px;overflow:hidden"><div style="position:absolute;top:8.67px;font-size:14.4px;line-height:17.28px;color:#727378;font-weight:400;letter-spacing:0.9px;white-space:nowrap;left:29px;">40100 Construction Income</div></div><div style="position:absolute;top:606.15px;font-size:14px;line-height:16.8px;color:#85868b;font-weight:400;letter-spacing:0.95px;white-space:nowrap;left:592.0px;width:120px;text-align:right;">0</div><div style="position:absolute;top:606.15px;font-size:14px;line-height:16.8px;color:#85868b;font-weight:400;letter-spacing:0.95px;white-space:nowrap;left:723.5px;width:120px;text-align:right;">0</div><div style="position:absolute;top:606.15px;font-size:14px;line-height:16.8px;color:#85868b;font-weight:400;letter-spacing:0.95px;white-space:nowrap;left:855.0px;width:120px;text-align:right;">0</div><div style="position:absolute;top:606.15px;font-size:14px;line-height:16.8px;color:#85868b;font-weight:400;letter-spacing:0.95px;white-space:nowrap;left:986.5px;width:120px;text-align:right;">0</div><div style="position:absolute;top:606.15px;font-size:14px;line-height:16.8px;color:#85868b;font-weight:400;letter-spacing:0.95px;white-space:nowrap;left:1118.0px;width:120px;text-align:right;">0</div><div style="position:absolute;top:606.15px;font-size:14px;line-height:16.8px;color:#85868b;font-weight:400;letter-spacing:0.95px;white-space:nowrap;left:1249.5px;width:120px;text-align:right;">0</div><div style="position:absolute;top:606.15px;font-size:14px;line-height:16.8px;color:#85868b;font-weight:400;letter-spacing:0.95px;white-space:nowrap;left:1381.0px;width:120px;text-align:right;">0</div><div style="position:absolute;top:606.15px;font-size:14px;line-height:16.8px;color:#85868b;font-weight:400;letter-spacing:0.95px;white-space:nowrap;left:1512.5px;width:120px;text-align:right;">0</div><div style="position:absolute;top:606.15px;font-size:14px;line-height:16.8px;color:#85868b;font-weight:400;letter-spacing:0.95px;white-space:nowrap;left:1644.0px;width:120px;text-align:right;">0</div><div style="position:absolute;top:606.15px;font-size:14px;line-height:16.8px;color:#85868b;font-weight:400;letter-spacing:0.95px;white-space:nowrap;left:1775.5px;width:120px;text-align:right;">0</div><div style="position:absolute;left:202px;top:637.8px;width:20.5px;height:20.7px;background:#e4e7eb;border-radius:5px"></div><svg style="position:absolute;left:229px;top:636.2px" width="16" height="16" viewBox="0 0 16 16"><path d="M13.76 8.00 L13.55 9.55 L15.56 10.63 L14.06 13.23 L12.12 12.03 L10.88 12.99 L9.43 13.58 L9.50 15.86 L6.50 15.86 L6.57 13.58 L5.12 12.99 L3.88 12.03 L1.94 13.23 L0.44 10.63 L2.45 9.55 L2.24 8.00 L2.45 6.45 L0.44 5.37 L1.94 2.77 L3.88 3.97 L5.12 3.01 L6.57 2.42 L6.50 0.14 L9.50 0.14 L9.43 2.42 L10.88 3.01 L12.12 3.97 L14.06 2.77 L15.56 5.37 L13.55 6.45Z" fill="#e2e6ee"/><circle cx="8.0" cy="8.0" r="2.88" fill="#fefefd"/></svg><svg style="position:absolute;left:258.5px;top:639px" width="11" height="8" viewBox="0 0 11 8"><path d="M1 1.5 L5.5 6 L10 1.5" fill="none" stroke="#6d8fd8" stroke-width="1.7"/></svg><svg style="position:absolute;left:273.5px;top:637.5px" width="15" height="14" viewBox="0 0 15 14"><path d="M6 6 L12.2 11.8" stroke="#dde2ea" stroke-width="2.3" stroke-linecap="round"/><circle cx="4.6" cy="4.6" r="3.6" fill="#dde2ea"/><path d="M0 2.6 L2.6 0 L5.2 2.6 L2.6 5.2Z" fill="#fefefd"/></svg><div style="position:absolute;top:638.58px;font-size:14.5px;line-height:17.4px;color:#5e6066;font-weight:400;letter-spacing:0.3px;white-space:nowrap;left:299.5px;width:24px;text-align:center;">3</div><div style="position:absolute;left:328px;top:630px;width:262px;height:33px;overflow:hidden"><div style="position:absolute;top:8.67px;font-size:14.4px;line-height:17.28px;color:#727378;font-weight:400;letter-spacing:0.9px;white-space:nowrap;left:49px;">40110 Design Income</div></div><div style="position:absolute;top:639.25px;font-size:14px;line-height:16.8px;color:#85868b;font-weight:400;letter-spacing:0.95px;white-space:nowrap;left:592.0px;width:120px;text-align:right;">1,060</div><div style="position:absolute;top:639.25px;font-size:14px;line-height:16.8px;color:#85868b;font-weight:400;letter-spacing:0.95px;white-space:nowrap;left:723.5px;width:120px;text-align:right;">0</div><div style="position:absolute;top:639.25px;font-size:14px;line-height:16.8px;color:#85868b;font-weight:400;letter-spacing:0.95px;white-space:nowrap;left:855.0px;width:120px;text-align:right;">10,600</div><div style="position:absolute;top:639.25px;font-size:14px;line-height:16.8px;color:#85868b;font-weight:400;letter-spacing:0.95px;white-space:nowrap;left:986.5px;width:120px;text-align:right;">0</div><div style="position:absolute;top:639.25px;font-size:14px;line-height:16.8px;color:#85868b;font-weight:400;letter-spacing:0.95px;white-space:nowrap;left:1118.0px;width:120px;text-align:right;">10,600</div><div style="position:absolute;top:639.25px;font-size:14px;line-height:16.8px;color:#85868b;font-weight:400;letter-spacing:0.95px;white-space:nowrap;left:1249.5px;width:120px;text-align:right;">0</div><div style="position:absolute;top:639.25px;font-size:14px;line-height:16.8px;color:#85868b;font-weight:400;letter-spacing:0.95px;white-space:nowrap;left:1381.0px;width:120px;text-align:right;">0</div><div style="position:absolute;top:639.25px;font-size:14px;line-height:16.8px;color:#85868b;font-weight:400;letter-spacing:0.95px;white-space:nowrap;left:1512.5px;width:120px;text-align:right;">2,544</div><div style="position:absolute;top:639.25px;font-size:14px;line-height:16.8px;color:#85868b;font-weight:400;letter-spacing:0.95px;white-space:nowrap;left:1644.0px;width:120px;text-align:right;">0</div><div style="position:absolute;top:639.25px;font-size:14px;line-height:16.8px;color:#85868b;font-weight:400;letter-spacing:0.95px;white-space:nowrap;left:1775.5px;width:120px;text-align:right;">5,300</div><div style="position:absolute;left:202px;top:671.3px;width:20.5px;height:20.7px;background:#e4e7eb;border-radius:5px"></div><svg style="position:absolute;left:229px;top:669.7px" width="16" height="16" viewBox="0 0 16 16"><path d="M13.76 8.00 L13.55 9.55 L15.56 10.63 L14.06 13.23 L12.12 12.03 L10.88 12.99 L9.43 13.58 L9.50 15.86 L6.50 15.86 L6.57 13.58 L5.12 12.99 L3.88 12.03 L1.94 13.23 L0.44 10.63 L2.45 9.55 L2.24 8.00 L2.45 6.45 L0.44 5.37 L1.94 2.77 L3.88 3.97 L5.12 3.01 L6.57 2.42 L6.50 0.14 L9.50 0.14 L9.43 2.42 L10.88 3.01 L12.12 3.97 L14.06 2.77 L15.56 5.37 L13.55 6.45Z" fill="#e2e6ee"/><circle cx="8.0" cy="8.0" r="2.88" fill="#fefefd"/></svg><svg style="position:absolute;left:273.5px;top:671.0px" width="15" height="14" viewBox="0 0 15 14"><path d="M6 6 L12.2 11.8" stroke="#dde2ea" stroke-width="2.3" stroke-linecap="round"/><circle cx="4.6" cy="4.6" r="3.6" fill="#dde2ea"/><path d="M0 2.6 L2.6 0 L5.2 2.6 L2.6 5.2Z" fill="#fefefd"/></svg><div style="position:absolute;top:672.08px;font-size:14.5px;line-height:17.4px;color:#5e6066;font-weight:400;letter-spacing:0.3px;white-space:nowrap;left:299.5px;width:24px;text-align:center;">4</div><div style="position:absolute;left:328px;top:663.5px;width:262px;height:33px;overflow:hidden"><div style="position:absolute;top:8.67px;font-size:14.4px;line-height:17.28px;color:#727378;font-weight:400;letter-spacing:0.9px;white-space:nowrap;left:69px;">Design Income Other</div></div><div style="position:absolute;top:672.75px;font-size:14px;line-height:16.8px;color:#85868b;font-weight:400;letter-spacing:0.95px;white-space:nowrap;left:592.0px;width:120px;text-align:right;">0</div><div style="position:absolute;top:672.75px;font-size:14px;line-height:16.8px;color:#85868b;font-weight:400;letter-spacing:0.95px;white-space:nowrap;left:723.5px;width:120px;text-align:right;">0</div><div style="position:absolute;top:672.75px;font-size:14px;line-height:16.8px;color:#85868b;font-weight:400;letter-spacing:0.95px;white-space:nowrap;left:855.0px;width:120px;text-align:right;">0</div><div style="position:absolute;top:672.75px;font-size:14px;line-height:16.8px;color:#85868b;font-weight:400;letter-spacing:0.95px;white-space:nowrap;left:986.5px;width:120px;text-align:right;">0</div><div style="position:absolute;top:672.75px;font-size:14px;line-height:16.8px;color:#85868b;font-weight:400;letter-spacing:0.95px;white-space:nowrap;left:1118.0px;width:120px;text-align:right;">0</div><div style="position:absolute;top:672.75px;font-size:14px;line-height:16.8px;color:#85868b;font-weight:400;letter-spacing:0.95px;white-space:nowrap;left:1249.5px;width:120px;text-align:right;">0</div><div style="position:absolute;top:672.75px;font-size:14px;line-height:16.8px;color:#85868b;font-weight:400;letter-spacing:0.95px;white-space:nowrap;left:1381.0px;width:120px;text-align:right;">0</div><div style="position:absolute;top:672.75px;font-size:14px;line-height:16.8px;color:#85868b;font-weight:400;letter-spacing:0.95px;white-space:nowrap;left:1512.5px;width:120px;text-align:right;">0</div><div style="position:absolute;top:672.75px;font-size:14px;line-height:16.8px;color:#85868b;font-weight:400;letter-spacing:0.95px;white-space:nowrap;left:1644.0px;width:120px;text-align:right;">0</div><div style="position:absolute;top:672.75px;font-size:14px;line-height:16.8px;color:#85868b;font-weight:400;letter-spacing:0.95px;white-space:nowrap;left:1775.5px;width:120px;text-align:right;">0</div><div style="position:absolute;left:202px;top:704.4px;width:20.5px;height:20.7px;background:#e4e7eb;border-radius:5px"></div><svg style="position:absolute;left:229px;top:702.8000000000001px" width="16" height="16" viewBox="0 0 16 16"><path d="M13.76 8.00 L13.55 9.55 L15.56 10.63 L14.06 13.23 L12.12 12.03 L10.88 12.99 L9.43 13.58 L9.50 15.86 L6.50 15.86 L6.57 13.58 L5.12 12.99 L3.88 12.03 L1.94 13.23 L0.44 10.63 L2.45 9.55 L2.24 8.00 L2.45 6.45 L0.44 5.37 L1.94 2.77 L3.88 3.97 L5.12 3.01 L6.57 2.42 L6.50 0.14 L9.50 0.14 L9.43 2.42 L10.88 3.01 L12.12 3.97 L14.06 2.77 L15.56 5.37 L13.55 6.45Z" fill="#e2e6ee"/><circle cx="8.0" cy="8.0" r="2.88" fill="#fefefd"/></svg><svg style="position:absolute;left:273px;top:705.6px" width="15" height="13" viewBox="0 0 15 13"><path d="M7.5 1.5 L13.8 11.8 H1.2Z" fill="none" stroke="#f49a7a" stroke-width="1.6" stroke-linejoin="round"/><rect x="6.9" y="5" width="1.2" height="3.6" fill="#f49a7a"/><rect x="6.9" y="9.3" width="1.2" height="1.2" fill="#f49a7a"/></svg><div style="position:absolute;top:705.18px;font-size:14.5px;line-height:17.4px;color:#5e6066;font-weight:400;letter-spacing:0.3px;white-space:nowrap;left:299.5px;width:24px;text-align:center;">5</div><div style="position:absolute;left:328px;top:696.6px;width:262px;height:33px;overflow:hidden"><div style="position:absolute;top:8.67px;font-size:14.4px;line-height:17.28px;color:#727378;font-weight:400;letter-spacing:0.9px;white-space:nowrap;left:69px;">Other Design Income</div></div><div style="position:absolute;top:705.85px;font-size:14px;line-height:16.8px;color:#85868b;font-weight:400;letter-spacing:0.95px;white-space:nowrap;left:592.0px;width:120px;text-align:right;">0</div><div style="position:absolute;top:705.85px;font-size:14px;line-height:16.8px;color:#85868b;font-weight:400;letter-spacing:0.95px;white-space:nowrap;left:723.5px;width:120px;text-align:right;">0</div><div style="position:absolute;top:705.85px;font-size:14px;line-height:16.8px;color:#85868b;font-weight:400;letter-spacing:0.95px;white-space:nowrap;left:855.0px;width:120px;text-align:right;">0</div><div style="position:absolute;top:705.85px;font-size:14px;line-height:16.8px;color:#85868b;font-weight:400;letter-spacing:0.95px;white-space:nowrap;left:986.5px;width:120px;text-align:right;">0</div><div style="position:absolute;top:705.85px;font-size:14px;line-height:16.8px;color:#85868b;font-weight:400;letter-spacing:0.95px;white-space:nowrap;left:1118.0px;width:120px;text-align:right;">0</div><div style="position:absolute;top:705.85px;font-size:14px;line-height:16.8px;color:#85868b;font-weight:400;letter-spacing:0.95px;white-space:nowrap;left:1249.5px;width:120px;text-align:right;">0</div><div style="position:absolute;top:705.85px;font-size:14px;line-height:16.8px;color:#85868b;font-weight:400;letter-spacing:0.95px;white-space:nowrap;left:1381.0px;width:120px;text-align:right;">0</div><div style="position:absolute;top:705.85px;font-size:14px;line-height:16.8px;color:#85868b;font-weight:400;letter-spacing:0.95px;white-space:nowrap;left:1512.5px;width:120px;text-align:right;">0</div><div style="position:absolute;top:705.85px;font-size:14px;line-height:16.8px;color:#85868b;font-weight:400;letter-spacing:0.95px;white-space:nowrap;left:1644.0px;width:120px;text-align:right;">0</div><div style="position:absolute;top:705.85px;font-size:14px;line-height:16.8px;color:#85868b;font-weight:400;letter-spacing:0.95px;white-space:nowrap;left:1775.5px;width:120px;text-align:right;">0</div><svg style="position:absolute;left:201.5px;top:739px" width="19" height="16" viewBox="0 0 19 16"><path d="M1.5 0.5 V14.5 H18" fill="none" stroke="#5a78c0" stroke-width="1.7"/><path d="M3.5 11.5 L7.5 6.5 L10.5 9.5 L16 3" fill="none" stroke="#5a78c0" stroke-width="1.6"/></svg><div style="position:absolute;top:738.68px;font-size:14.5px;line-height:17.4px;color:#5e6066;font-weight:400;letter-spacing:0.3px;white-space:nowrap;left:299.5px;width:24px;text-align:center;">6</div><div style="position:absolute;left:328px;top:731px;width:262px;height:33px;overflow:hidden"><div style="position:absolute;top:7.77px;font-size:14.4px;line-height:17.28px;color:#404248;font-weight:700;letter-spacing:0.9px;white-space:nowrap;left:69px;">Total 40110 Design Income</div></div><div style="position:absolute;top:740.25px;font-size:14px;line-height:16.8px;color:#45474e;font-weight:700;letter-spacing:0.95px;white-space:nowrap;left:592.0px;width:120px;text-align:right;">1,060</div><div style="position:absolute;top:740.25px;font-size:14px;line-height:16.8px;color:#45474e;font-weight:700;letter-spacing:0.95px;white-space:nowrap;left:723.5px;width:120px;text-align:right;">0</div><div style="position:absolute;top:740.25px;font-size:14px;line-height:16.8px;color:#45474e;font-weight:700;letter-spacing:0.95px;white-space:nowrap;left:855.0px;width:120px;text-align:right;">10,600</div><div style="position:absolute;top:740.25px;font-size:14px;line-height:16.8px;color:#45474e;font-weight:700;letter-spacing:0.95px;white-space:nowrap;left:986.5px;width:120px;text-align:right;">0</div><div style="position:absolute;top:740.25px;font-size:14px;line-height:16.8px;color:#45474e;font-weight:700;letter-spacing:0.95px;white-space:nowrap;left:1118.0px;width:120px;text-align:right;">10,600</div><div style="position:absolute;top:740.25px;font-size:14px;line-height:16.8px;color:#45474e;font-weight:700;letter-spacing:0.95px;white-space:nowrap;left:1249.5px;width:120px;text-align:right;">0</div><div style="position:absolute;top:740.25px;font-size:14px;line-height:16.8px;color:#45474e;font-weight:700;letter-spacing:0.95px;white-space:nowrap;left:1381.0px;width:120px;text-align:right;">0</div><div style="position:absolute;top:740.25px;font-size:14px;line-height:16.8px;color:#45474e;font-weight:700;letter-spacing:0.95px;white-space:nowrap;left:1512.5px;width:120px;text-align:right;">2,544</div><div style="position:absolute;top:740.25px;font-size:14px;line-height:16.8px;color:#45474e;font-weight:700;letter-spacing:0.95px;white-space:nowrap;left:1644.0px;width:120px;text-align:right;">0</div><div style="position:absolute;top:740.25px;font-size:14px;line-height:16.8px;color:#45474e;font-weight:700;letter-spacing:0.95px;white-space:nowrap;left:1775.5px;width:120px;text-align:right;">5,300</div><div style="position:absolute;left:202px;top:771.1999999999999px;width:20.5px;height:20.7px;background:#e4e7eb;border-radius:5px"></div><svg style="position:absolute;left:229px;top:769.6px" width="16" height="16" viewBox="0 0 16 16"><path d="M13.76 8.00 L13.55 9.55 L15.56 10.63 L14.06 13.23 L12.12 12.03 L10.88 12.99 L9.43 13.58 L9.50 15.86 L6.50 15.86 L6.57 13.58 L5.12 12.99 L3.88 12.03 L1.94 13.23 L0.44 10.63 L2.45 9.55 L2.24 8.00 L2.45 6.45 L0.44 5.37 L1.94 2.77 L3.88 3.97 L5.12 3.01 L6.57 2.42 L6.50 0.14 L9.50 0.14 L9.43 2.42 L10.88 3.01 L12.12 3.97 L14.06 2.77 L15.56 5.37 L13.55 6.45Z" fill="#e2e6ee"/><circle cx="8.0" cy="8.0" r="2.88" fill="#fefefd"/></svg><svg style="position:absolute;left:273.5px;top:770.9px" width="15" height="14" viewBox="0 0 15 14"><path d="M6 6 L12.2 11.8" stroke="#dde2ea" stroke-width="2.3" stroke-linecap="round"/><circle cx="4.6" cy="4.6" r="3.6" fill="#dde2ea"/><path d="M0 2.6 L2.6 0 L5.2 2.6 L2.6 5.2Z" fill="#fefefd"/></svg><div style="position:absolute;top:771.98px;font-size:14.5px;line-height:17.4px;color:#5e6066;font-weight:400;letter-spacing:0.3px;white-space:nowrap;left:299.5px;width:24px;text-align:center;">7</div><div style="position:absolute;left:328px;top:763.4px;width:262px;height:33px;overflow:hidden"><div style="position:absolute;top:8.67px;font-size:14.4px;line-height:17.28px;color:#727378;font-weight:400;letter-spacing:0.9px;white-space:nowrap;left:49px;">40120 Equipment Rental Income</div></div><div style="position:absolute;top:772.65px;font-size:14px;line-height:16.8px;color:#85868b;font-weight:400;letter-spacing:0.95px;white-space:nowrap;left:592.0px;width:120px;text-align:right;">0</div><div style="position:absolute;top:772.65px;font-size:14px;line-height:16.8px;color:#85868b;font-weight:400;letter-spacing:0.95px;white-space:nowrap;left:723.5px;width:120px;text-align:right;">0</div><div style="position:absolute;top:772.65px;font-size:14px;line-height:16.8px;color:#85868b;font-weight:400;letter-spacing:0.95px;white-space:nowrap;left:855.0px;width:120px;text-align:right;">0</div><div style="position:absolute;top:772.65px;font-size:14px;line-height:16.8px;color:#85868b;font-weight:400;letter-spacing:0.95px;white-space:nowrap;left:986.5px;width:120px;text-align:right;">10,600</div><div style="position:absolute;top:772.65px;font-size:14px;line-height:16.8px;color:#85868b;font-weight:400;letter-spacing:0.95px;white-space:nowrap;left:1118.0px;width:120px;text-align:right;">0</div><div style="position:absolute;top:772.65px;font-size:14px;line-height:16.8px;color:#85868b;font-weight:400;letter-spacing:0.95px;white-space:nowrap;left:1249.5px;width:120px;text-align:right;">0</div><div style="position:absolute;top:772.65px;font-size:14px;line-height:16.8px;color:#85868b;font-weight:400;letter-spacing:0.95px;white-space:nowrap;left:1381.0px;width:120px;text-align:right;">0</div><div style="position:absolute;top:772.65px;font-size:14px;line-height:16.8px;color:#85868b;font-weight:400;letter-spacing:0.95px;white-space:nowrap;left:1512.5px;width:120px;text-align:right;">0</div><div style="position:absolute;top:772.65px;font-size:14px;line-height:16.8px;color:#85868b;font-weight:400;letter-spacing:0.95px;white-space:nowrap;left:1644.0px;width:120px;text-align:right;">0</div><div style="position:absolute;top:772.65px;font-size:14px;line-height:16.8px;color:#85868b;font-weight:400;letter-spacing:0.95px;white-space:nowrap;left:1775.5px;width:120px;text-align:right;">0</div><div style="position:absolute;left:202px;top:804.5px;width:20.5px;height:20.7px;background:#e4e7eb;border-radius:5px"></div><svg style="position:absolute;left:229px;top:802.9000000000001px" width="16" height="16" viewBox="0 0 16 16"><path d="M13.76 8.00 L13.55 9.55 L15.56 10.63 L14.06 13.23 L12.12 12.03 L10.88 12.99 L9.43 13.58 L9.50 15.86 L6.50 15.86 L6.57 13.58 L5.12 12.99 L3.88 12.03 L1.94 13.23 L0.44 10.63 L2.45 9.55 L2.24 8.00 L2.45 6.45 L0.44 5.37 L1.94 2.77 L3.88 3.97 L5.12 3.01 L6.57 2.42 L6.50 0.14 L9.50 0.14 L9.43 2.42 L10.88 3.01 L12.12 3.97 L14.06 2.77 L15.56 5.37 L13.55 6.45Z" fill="#e2e6ee"/><circle cx="8.0" cy="8.0" r="2.88" fill="#fefefd"/></svg><svg style="position:absolute;left:273.5px;top:804.2px" width="15" height="14" viewBox="0 0 15 14"><path d="M6 6 L12.2 11.8" stroke="#dde2ea" stroke-width="2.3" stroke-linecap="round"/><circle cx="4.6" cy="4.6" r="3.6" fill="#dde2ea"/><path d="M0 2.6 L2.6 0 L5.2 2.6 L2.6 5.2Z" fill="#fefefd"/></svg><div style="position:absolute;top:805.28px;font-size:14.5px;line-height:17.4px;color:#5e6066;font-weight:400;letter-spacing:0.3px;white-space:nowrap;left:299.5px;width:24px;text-align:center;">8</div><div style="position:absolute;left:328px;top:796.7px;width:262px;height:33px;overflow:hidden"><div style="position:absolute;top:8.67px;font-size:14.4px;line-height:17.28px;color:#727378;font-weight:400;letter-spacing:0.9px;white-space:nowrap;left:49px;">40130 Labor Income</div></div><div style="position:absolute;top:805.95px;font-size:14px;line-height:16.8px;color:#85868b;font-weight:400;letter-spacing:0.95px;white-space:nowrap;left:592.0px;width:120px;text-align:right;">1,246</div><div style="position:absolute;top:805.95px;font-size:14px;line-height:16.8px;color:#85868b;font-weight:400;letter-spacing:0.95px;white-space:nowrap;left:723.5px;width:120px;text-align:right;">1,733</div><div style="position:absolute;top:805.95px;font-size:14px;line-height:16.8px;color:#85868b;font-weight:400;letter-spacing:0.95px;white-space:nowrap;left:855.0px;width:120px;text-align:right;">10,600</div><div style="position:absolute;top:805.95px;font-size:14px;line-height:16.8px;color:#85868b;font-weight:400;letter-spacing:0.95px;white-space:nowrap;left:986.5px;width:120px;text-align:right;">890</div><div style="position:absolute;top:805.95px;font-size:14px;line-height:16.8px;color:#85868b;font-weight:400;letter-spacing:0.95px;white-space:nowrap;left:1118.0px;width:120px;text-align:right;">10,600</div><div style="position:absolute;top:805.95px;font-size:14px;line-height:16.8px;color:#85868b;font-weight:400;letter-spacing:0.95px;white-space:nowrap;left:1249.5px;width:120px;text-align:right;">0</div><div style="position:absolute;top:805.95px;font-size:14px;line-height:16.8px;color:#85868b;font-weight:400;letter-spacing:0.95px;white-space:nowrap;left:1381.0px;width:120px;text-align:right;">3,311</div><div style="position:absolute;top:805.95px;font-size:14px;line-height:16.8px;color:#85868b;font-weight:400;letter-spacing:0.95px;white-space:nowrap;left:1512.5px;width:120px;text-align:right;">2,120</div><div style="position:absolute;top:805.95px;font-size:14px;line-height:16.8px;color:#85868b;font-weight:400;letter-spacing:0.95px;white-space:nowrap;left:1644.0px;width:120px;text-align:right;">0</div><div style="position:absolute;top:805.95px;font-size:14px;line-height:16.8px;color:#85868b;font-weight:400;letter-spacing:0.95px;white-space:nowrap;left:1775.5px;width:120px;text-align:right;">4,145</div><div style="position:absolute;left:202px;top:837.6999999999999px;width:20.5px;height:20.7px;background:#e4e7eb;border-radius:5px"></div><svg style="position:absolute;left:229px;top:836.1px" width="16" height="16" viewBox="0 0 16 16"><path d="M13.76 8.00 L13.55 9.55 L15.56 10.63 L14.06 13.23 L12.12 12.03 L10.88 12.99 L9.43 13.58 L9.50 15.86 L6.50 15.86 L6.57 13.58 L5.12 12.99 L3.88 12.03 L1.94 13.23 L0.44 10.63 L2.45 9.55 L2.24 8.00 L2.45 6.45 L0.44 5.37 L1.94 2.77 L3.88 3.97 L5.12 3.01 L6.57 2.42 L6.50 0.14 L9.50 0.14 L9.43 2.42 L10.88 3.01 L12.12 3.97 L14.06 2.77 L15.56 5.37 L13.55 6.45Z" fill="#e2e6ee"/><circle cx="8.0" cy="8.0" r="2.88" fill="#fefefd"/></svg><svg style="position:absolute;left:273.5px;top:837.4px" width="15" height="14" viewBox="0 0 15 14"><path d="M6 6 L12.2 11.8" stroke="#dde2ea" stroke-width="2.3" stroke-linecap="round"/><circle cx="4.6" cy="4.6" r="3.6" fill="#dde2ea"/><path d="M0 2.6 L2.6 0 L5.2 2.6 L2.6 5.2Z" fill="#fefefd"/></svg><div style="position:absolute;top:838.48px;font-size:14.5px;line-height:17.4px;color:#5e6066;font-weight:400;letter-spacing:0.3px;white-space:nowrap;left:299.5px;width:24px;text-align:center;">9</div><div style="position:absolute;left:328px;top:829.9px;width:262px;height:33px;overflow:hidden"><div style="position:absolute;top:8.67px;font-size:14.4px;line-height:17.28px;color:#727378;font-weight:400;letter-spacing:0.9px;white-space:nowrap;left:49px;">40140 Materials Income</div></div><div style="position:absolute;top:839.15px;font-size:14px;line-height:16.8px;color:#85868b;font-weight:400;letter-spacing:0.95px;white-space:nowrap;left:592.0px;width:120px;text-align:right;">20,055</div><div style="position:absolute;top:839.15px;font-size:14px;line-height:16.8px;color:#85868b;font-weight:400;letter-spacing:0.95px;white-space:nowrap;left:723.5px;width:120px;text-align:right;">17,043</div><div style="position:absolute;top:839.15px;font-size:14px;line-height:16.8px;color:#85868b;font-weight:400;letter-spacing:0.95px;white-space:nowrap;left:855.0px;width:120px;text-align:right;">0</div><div style="position:absolute;top:839.15px;font-size:14px;line-height:16.8px;color:#85868b;font-weight:400;letter-spacing:0.95px;white-space:nowrap;left:986.5px;width:120px;text-align:right;">20,250</div><div style="position:absolute;top:839.15px;font-size:14px;line-height:16.8px;color:#85868b;font-weight:400;letter-spacing:0.95px;white-space:nowrap;left:1118.0px;width:120px;text-align:right;">0</div><div style="position:absolute;top:839.15px;font-size:14px;line-height:16.8px;color:#85868b;font-weight:400;letter-spacing:0.95px;white-space:nowrap;left:1249.5px;width:120px;text-align:right;">23,320</div><div style="position:absolute;top:839.15px;font-size:14px;line-height:16.8px;color:#85868b;font-weight:400;letter-spacing:0.95px;white-space:nowrap;left:1381.0px;width:120px;text-align:right;">33,926</div><div style="position:absolute;top:839.15px;font-size:14px;line-height:16.8px;color:#85868b;font-weight:400;letter-spacing:0.95px;white-space:nowrap;left:1512.5px;width:120px;text-align:right;">0</div><div style="position:absolute;top:839.15px;font-size:14px;line-height:16.8px;color:#85868b;font-weight:400;letter-spacing:0.95px;white-space:nowrap;left:1644.0px;width:120px;text-align:right;">15,900</div><div style="position:absolute;top:839.15px;font-size:14px;line-height:16.8px;color:#85868b;font-weight:400;letter-spacing:0.95px;white-space:nowrap;left:1775.5px;width:120px;text-align:right;">24,020</div><div style="position:absolute;left:202px;top:871.0999999999999px;width:20.5px;height:20.7px;background:#e4e7eb;border-radius:5px"></div><svg style="position:absolute;left:229px;top:869.5px" width="16" height="16" viewBox="0 0 16 16"><path d="M13.76 8.00 L13.55 9.55 L15.56 10.63 L14.06 13.23 L12.12 12.03 L10.88 12.99 L9.43 13.58 L9.50 15.86 L6.50 15.86 L6.57 13.58 L5.12 12.99 L3.88 12.03 L1.94 13.23 L0.44 10.63 L2.45 9.55 L2.24 8.00 L2.45 6.45 L0.44 5.37 L1.94 2.77 L3.88 3.97 L5.12 3.01 L6.57 2.42 L6.50 0.14 L9.50 0.14 L9.43 2.42 L10.88 3.01 L12.12 3.97 L14.06 2.77 L15.56 5.37 L13.55 6.45Z" fill="#e2e6ee"/><circle cx="8.0" cy="8.0" r="2.88" fill="#fefefd"/></svg><svg style="position:absolute;left:273.5px;top:870.8px" width="15" height="14" viewBox="0 0 15 14"><path d="M6 6 L12.2 11.8" stroke="#dde2ea" stroke-width="2.3" stroke-linecap="round"/><circle cx="4.6" cy="4.6" r="3.6" fill="#dde2ea"/><path d="M0 2.6 L2.6 0 L5.2 2.6 L2.6 5.2Z" fill="#fefefd"/></svg><div style="position:absolute;top:871.88px;font-size:14.5px;line-height:17.4px;color:#5e6066;font-weight:400;letter-spacing:0.3px;white-space:nowrap;left:299.5px;width:24px;text-align:center;">10</div><div style="position:absolute;left:328px;top:863.3px;width:262px;height:33px;overflow:hidden"><div style="position:absolute;top:8.67px;font-size:14.4px;line-height:17.28px;color:#727378;font-weight:400;letter-spacing:0.9px;white-space:nowrap;left:49px;">40150 Subcontracted Labor Income</div></div><div style="position:absolute;top:872.55px;font-size:14px;line-height:16.8px;color:#85868b;font-weight:400;letter-spacing:0.95px;white-space:nowrap;left:592.0px;width:120px;text-align:right;">13,685</div><div style="position:absolute;top:872.55px;font-size:14px;line-height:16.8px;color:#85868b;font-weight:400;letter-spacing:0.95px;white-space:nowrap;left:723.5px;width:120px;text-align:right;">14,290</div><div style="position:absolute;top:872.55px;font-size:14px;line-height:16.8px;color:#85868b;font-weight:400;letter-spacing:0.95px;white-space:nowrap;left:855.0px;width:120px;text-align:right;">17,490</div><div style="position:absolute;top:872.55px;font-size:14px;line-height:16.8px;color:#85868b;font-weight:400;letter-spacing:0.95px;white-space:nowrap;left:986.5px;width:120px;text-align:right;">2,894</div><div style="position:absolute;top:872.55px;font-size:14px;line-height:16.8px;color:#85868b;font-weight:400;letter-spacing:0.95px;white-space:nowrap;left:1118.0px;width:120px;text-align:right;">17,490</div><div style="position:absolute;top:872.55px;font-size:14px;line-height:16.8px;color:#85868b;font-weight:400;letter-spacing:0.95px;white-space:nowrap;left:1249.5px;width:120px;text-align:right;">12,301</div><div style="position:absolute;top:872.55px;font-size:14px;line-height:16.8px;color:#85868b;font-weight:400;letter-spacing:0.95px;white-space:nowrap;left:1381.0px;width:120px;text-align:right;">0</div><div style="position:absolute;top:872.55px;font-size:14px;line-height:16.8px;color:#85868b;font-weight:400;letter-spacing:0.95px;white-space:nowrap;left:1512.5px;width:120px;text-align:right;">34,106</div><div style="position:absolute;top:872.55px;font-size:14px;line-height:16.8px;color:#85868b;font-weight:400;letter-spacing:0.95px;white-space:nowrap;left:1644.0px;width:120px;text-align:right;">27,682</div><div style="position:absolute;top:872.55px;font-size:14px;line-height:16.8px;color:#85868b;font-weight:400;letter-spacing:0.95px;white-space:nowrap;left:1775.5px;width:120px;text-align:right;">6,524</div><div style="position:absolute;left:202px;top:904.8px;width:20.5px;height:20.7px;background:#e4e7eb;border-radius:5px"></div><svg style="position:absolute;left:229px;top:903.2px" width="16" height="16" viewBox="0 0 16 16"><path d="M13.76 8.00 L13.55 9.55 L15.56 10.63 L14.06 13.23 L12.12 12.03 L10.88 12.99 L9.43 13.58 L9.50 15.86 L6.50 15.86 L6.57 13.58 L5.12 12.99 L3.88 12.03 L1.94 13.23 L0.44 10.63 L2.45 9.55 L2.24 8.00 L2.45 6.45 L0.44 5.37 L1.94 2.77 L3.88 3.97 L5.12 3.01 L6.57 2.42 L6.50 0.14 L9.50 0.14 L9.43 2.42 L10.88 3.01 L12.12 3.97 L14.06 2.77 L15.56 5.37 L13.55 6.45Z" fill="#e2e6ee"/><circle cx="8.0" cy="8.0" r="2.88" fill="#fefefd"/></svg><svg style="position:absolute;left:273.5px;top:904.5px" width="15" height="14" viewBox="0 0 15 14"><path d="M6 6 L12.2 11.8" stroke="#dde2ea" stroke-width="2.3" stroke-linecap="round"/><circle cx="4.6" cy="4.6" r="3.6" fill="#dde2ea"/><path d="M0 2.6 L2.6 0 L5.2 2.6 L2.6 5.2Z" fill="#fefefd"/></svg><div style="position:absolute;top:905.58px;font-size:14.5px;line-height:17.4px;color:#5e6066;font-weight:400;letter-spacing:0.3px;white-space:nowrap;left:299.5px;width:24px;text-align:center;">11</div><div style="position:absolute;left:328px;top:897px;width:262px;height:33px;overflow:hidden"><div style="position:absolute;top:8.67px;font-size:14.4px;line-height:17.28px;color:#727378;font-weight:400;letter-spacing:0.9px;white-space:nowrap;left:49px;">40199 Less Discounts given</div></div><div style="position:absolute;top:906.25px;font-size:14px;line-height:16.8px;color:#85868b;font-weight:400;letter-spacing:0.95px;white-space:nowrap;left:592.0px;width:120px;text-align:right;">0</div><div style="position:absolute;top:906.25px;font-size:14px;line-height:16.8px;color:#85868b;font-weight:400;letter-spacing:0.95px;white-space:nowrap;left:723.5px;width:120px;text-align:right;">0</div><div style="position:absolute;top:906.25px;font-size:14px;line-height:16.8px;color:#85868b;font-weight:400;letter-spacing:0.95px;white-space:nowrap;left:855.0px;width:120px;text-align:right;">0</div><div style="position:absolute;top:906.25px;font-size:14px;line-height:16.8px;color:#85868b;font-weight:400;letter-spacing:0.95px;white-space:nowrap;left:986.5px;width:120px;text-align:right;">0</div><div style="position:absolute;top:906.25px;font-size:14px;line-height:16.8px;color:#85868b;font-weight:400;letter-spacing:0.95px;white-space:nowrap;left:1118.0px;width:120px;text-align:right;">0</div><div style="position:absolute;top:906.25px;font-size:14px;line-height:16.8px;color:#85868b;font-weight:400;letter-spacing:0.95px;white-space:nowrap;left:1249.5px;width:120px;text-align:right;">0</div><div style="position:absolute;top:906.25px;font-size:14px;line-height:16.8px;color:#85868b;font-weight:400;letter-spacing:0.95px;white-space:nowrap;left:1381.0px;width:120px;text-align:right;">0</div><div style="position:absolute;top:906.25px;font-size:14px;line-height:16.8px;color:#85868b;font-weight:400;letter-spacing:0.95px;white-space:nowrap;left:1512.5px;width:120px;text-align:right;">0</div><div style="position:absolute;top:906.25px;font-size:14px;line-height:16.8px;color:#85868b;font-weight:400;letter-spacing:0.95px;white-space:nowrap;left:1644.0px;width:120px;text-align:right;">0</div><div style="position:absolute;top:906.25px;font-size:14px;line-height:16.8px;color:#85868b;font-weight:400;letter-spacing:0.95px;white-space:nowrap;left:1775.5px;width:120px;text-align:right;">0</div><svg style="position:absolute;left:201.5px;top:939.3px" width="19" height="16" viewBox="0 0 19 16"><path d="M1.5 0.5 V14.5 H18" fill="none" stroke="#5a78c0" stroke-width="1.7"/><path d="M3.5 11.5 L7.5 6.5 L10.5 9.5 L16 3" fill="none" stroke="#5a78c0" stroke-width="1.6"/></svg><div style="position:absolute;top:938.98px;font-size:14.5px;line-height:17.4px;color:#5e6066;font-weight:400;letter-spacing:0.3px;white-space:nowrap;left:299.5px;width:24px;text-align:center;">12</div><div style="position:absolute;left:328px;top:931.3px;width:262px;height:33px;overflow:hidden"><div style="position:absolute;top:7.77px;font-size:14.4px;line-height:17.28px;color:#404248;font-weight:700;letter-spacing:0.9px;white-space:nowrap;left:49px;">Total 40100 Construction Income</div></div><div style="position:absolute;top:940.55px;font-size:14px;line-height:16.8px;color:#45474e;font-weight:700;letter-spacing:0.95px;white-space:nowrap;left:592.0px;width:120px;text-align:right;">36,046</div><div style="position:absolute;top:940.55px;font-size:14px;line-height:16.8px;color:#45474e;font-weight:700;letter-spacing:0.95px;white-space:nowrap;left:723.5px;width:120px;text-align:right;">33,067</div><div style="position:absolute;top:940.55px;font-size:14px;line-height:16.8px;color:#45474e;font-weight:700;letter-spacing:0.95px;white-space:nowrap;left:855.0px;width:120px;text-align:right;">38,690</div><div style="position:absolute;top:940.55px;font-size:14px;line-height:16.8px;color:#45474e;font-weight:700;letter-spacing:0.95px;white-space:nowrap;left:986.5px;width:120px;text-align:right;">34,634</div><div style="position:absolute;top:940.55px;font-size:14px;line-height:16.8px;color:#45474e;font-weight:700;letter-spacing:0.95px;white-space:nowrap;left:1118.0px;width:120px;text-align:right;">38,690</div><div style="position:absolute;top:940.55px;font-size:14px;line-height:16.8px;color:#45474e;font-weight:700;letter-spacing:0.95px;white-space:nowrap;left:1249.5px;width:120px;text-align:right;">35,621</div><div style="position:absolute;top:940.55px;font-size:14px;line-height:16.8px;color:#45474e;font-weight:700;letter-spacing:0.95px;white-space:nowrap;left:1381.0px;width:120px;text-align:right;">37,237</div><div style="position:absolute;top:940.55px;font-size:14px;line-height:16.8px;color:#45474e;font-weight:700;letter-spacing:0.95px;white-space:nowrap;left:1512.5px;width:120px;text-align:right;">38,770</div><div style="position:absolute;top:940.55px;font-size:14px;line-height:16.8px;color:#45474e;font-weight:700;letter-spacing:0.95px;white-space:nowrap;left:1644.0px;width:120px;text-align:right;">43,582</div><div style="position:absolute;top:940.55px;font-size:14px;line-height:16.8px;color:#45474e;font-weight:700;letter-spacing:0.95px;white-space:nowrap;left:1775.5px;width:120px;text-align:right;">39,989</div><div style="position:absolute;left:202px;top:969.5px;width:20.5px;height:20.7px;background:#e4e7eb;border-radius:5px"></div><svg style="position:absolute;left:229px;top:967.9000000000001px" width="16" height="16" viewBox="0 0 16 16"><path d="M13.76 8.00 L13.55 9.55 L15.56 10.63 L14.06 13.23 L12.12 12.03 L10.88 12.99 L9.43 13.58 L9.50 15.86 L6.50 15.86 L6.57 13.58 L5.12 12.99 L3.88 12.03 L1.94 13.23 L0.44 10.63 L2.45 9.55 L2.24 8.00 L2.45 6.45 L0.44 5.37 L1.94 2.77 L3.88 3.97 L5.12 3.01 L6.57 2.42 L6.50 0.14 L9.50 0.14 L9.43 2.42 L10.88 3.01 L12.12 3.97 L14.06 2.77 L15.56 5.37 L13.55 6.45Z" fill="#e2e6ee"/><circle cx="8.0" cy="8.0" r="2.88" fill="#fefefd"/></svg><svg style="position:absolute;left:258.5px;top:970.7px" width="11" height="8" viewBox="0 0 11 8"><path d="M1 1.5 L5.5 6 L10 1.5" fill="none" stroke="#6d8fd8" stroke-width="1.7"/></svg><svg style="position:absolute;left:273.5px;top:969.2px" width="15" height="14" viewBox="0 0 15 14"><path d="M6 6 L12.2 11.8" stroke="#dde2ea" stroke-width="2.3" stroke-linecap="round"/><circle cx="4.6" cy="4.6" r="3.6" fill="#dde2ea"/><path d="M0 2.6 L2.6 0 L5.2 2.6 L2.6 5.2Z" fill="#fefefd"/></svg><div style="position:absolute;top:970.28px;font-size:14.5px;line-height:17.4px;color:#5e6066;font-weight:400;letter-spacing:0.3px;white-space:nowrap;left:299.5px;width:24px;text-align:center;">13</div><div style="position:absolute;left:328px;top:961.7px;width:262px;height:33px;overflow:hidden"><div style="position:absolute;top:8.67px;font-size:14.4px;line-height:17.28px;color:#727378;font-weight:400;letter-spacing:0.9px;white-space:nowrap;left:29px;">40500 Reimbursement Income</div></div><div style="position:absolute;top:970.95px;font-size:14px;line-height:16.8px;color:#85868b;font-weight:400;letter-spacing:0.95px;white-space:nowrap;left:592.0px;width:120px;text-align:right;">0</div><div style="position:absolute;top:970.95px;font-size:14px;line-height:16.8px;color:#85868b;font-weight:400;letter-spacing:0.95px;white-space:nowrap;left:723.5px;width:120px;text-align:right;">0</div><div style="position:absolute;top:970.95px;font-size:14px;line-height:16.8px;color:#85868b;font-weight:400;letter-spacing:0.95px;white-space:nowrap;left:855.0px;width:120px;text-align:right;">0</div><div style="position:absolute;top:970.95px;font-size:14px;line-height:16.8px;color:#85868b;font-weight:400;letter-spacing:0.95px;white-space:nowrap;left:986.5px;width:120px;text-align:right;">0</div><div style="position:absolute;top:970.95px;font-size:14px;line-height:16.8px;color:#85868b;font-weight:400;letter-spacing:0.95px;white-space:nowrap;left:1118.0px;width:120px;text-align:right;">0</div><div style="position:absolute;top:970.95px;font-size:14px;line-height:16.8px;color:#85868b;font-weight:400;letter-spacing:0.95px;white-space:nowrap;left:1249.5px;width:120px;text-align:right;">0</div><div style="position:absolute;top:970.95px;font-size:14px;line-height:16.8px;color:#85868b;font-weight:400;letter-spacing:0.95px;white-space:nowrap;left:1381.0px;width:120px;text-align:right;">0</div><div style="position:absolute;top:970.95px;font-size:14px;line-height:16.8px;color:#85868b;font-weight:400;letter-spacing:0.95px;white-space:nowrap;left:1512.5px;width:120px;text-align:right;">0</div><div style="position:absolute;top:970.95px;font-size:14px;line-height:16.8px;color:#85868b;font-weight:400;letter-spacing:0.95px;white-space:nowrap;left:1644.0px;width:120px;text-align:right;">0</div><div style="position:absolute;top:970.95px;font-size:14px;line-height:16.8px;color:#85868b;font-weight:400;letter-spacing:0.95px;white-space:nowrap;left:1775.5px;width:120px;text-align:right;">0</div><div style="position:absolute;left:202px;top:1002.9px;width:20.5px;height:20.7px;background:#e4e7eb;border-radius:5px"></div><svg style="position:absolute;left:229px;top:1001.3000000000001px" width="16" height="16" viewBox="0 0 16 16"><path d="M13.76 8.00 L13.55 9.55 L15.56 10.63 L14.06 13.23 L12.12 12.03 L10.88 12.99 L9.43 13.58 L9.50 15.86 L6.50 15.86 L6.57 13.58 L5.12 12.99 L3.88 12.03 L1.94 13.23 L0.44 10.63 L2.45 9.55 L2.24 8.00 L2.45 6.45 L0.44 5.37 L1.94 2.77 L3.88 3.97 L5.12 3.01 L6.57 2.42 L6.50 0.14 L9.50 0.14 L9.43 2.42 L10.88 3.01 L12.12 3.97 L14.06 2.77 L15.56 5.37 L13.55 6.45Z" fill="#e2e6ee"/><circle cx="8.0" cy="8.0" r="2.88" fill="#fefefd"/></svg><svg style="position:absolute;left:273.5px;top:1002.6px" width="15" height="14" viewBox="0 0 15 14"><path d="M6 6 L12.2 11.8" stroke="#dde2ea" stroke-width="2.3" stroke-linecap="round"/><circle cx="4.6" cy="4.6" r="3.6" fill="#dde2ea"/><path d="M0 2.6 L2.6 0 L5.2 2.6 L2.6 5.2Z" fill="#fefefd"/></svg><div style="position:absolute;top:1003.68px;font-size:14.5px;line-height:17.4px;color:#5e6066;font-weight:400;letter-spacing:0.3px;white-space:nowrap;left:299.5px;width:24px;text-align:center;">14</div><div style="position:absolute;left:328px;top:995.1px;width:262px;height:33px;overflow:hidden"><div style="position:absolute;top:8.67px;font-size:14.4px;line-height:17.28px;color:#727378;font-weight:400;letter-spacing:0.9px;white-space:nowrap;left:49px;">40510 Mileage Income</div></div><div style="position:absolute;top:1004.35px;font-size:14px;line-height:16.8px;color:#85868b;font-weight:400;letter-spacing:0.95px;white-space:nowrap;left:592.0px;width:120px;text-align:right;">0</div><div style="position:absolute;top:1004.35px;font-size:14px;line-height:16.8px;color:#85868b;font-weight:400;letter-spacing:0.95px;white-space:nowrap;left:723.5px;width:120px;text-align:right;">0</div><div style="position:absolute;top:1004.35px;font-size:14px;line-height:16.8px;color:#85868b;font-weight:400;letter-spacing:0.95px;white-space:nowrap;left:855.0px;width:120px;text-align:right;">0</div><div style="position:absolute;top:1004.35px;font-size:14px;line-height:16.8px;color:#85868b;font-weight:400;letter-spacing:0.95px;white-space:nowrap;left:986.5px;width:120px;text-align:right;">0</div><div style="position:absolute;top:1004.35px;font-size:14px;line-height:16.8px;color:#85868b;font-weight:400;letter-spacing:0.95px;white-space:nowrap;left:1118.0px;width:120px;text-align:right;">0</div><div style="position:absolute;top:1004.35px;font-size:14px;line-height:16.8px;color:#85868b;font-weight:400;letter-spacing:0.95px;white-space:nowrap;left:1249.5px;width:120px;text-align:right;">0</div><div style="position:absolute;top:1004.35px;font-size:14px;line-height:16.8px;color:#85868b;font-weight:400;letter-spacing:0.95px;white-space:nowrap;left:1381.0px;width:120px;text-align:right;">0</div><div style="position:absolute;top:1004.35px;font-size:14px;line-height:16.8px;color:#85868b;font-weight:400;letter-spacing:0.95px;white-space:nowrap;left:1512.5px;width:120px;text-align:right;">0</div><div style="position:absolute;top:1004.35px;font-size:14px;line-height:16.8px;color:#85868b;font-weight:400;letter-spacing:0.95px;white-space:nowrap;left:1644.0px;width:120px;text-align:right;">0</div><div style="position:absolute;top:1004.35px;font-size:14px;line-height:16.8px;color:#85868b;font-weight:400;letter-spacing:0.95px;white-space:nowrap;left:1775.5px;width:120px;text-align:right;">0</div><div style="position:absolute;left:202px;top:1036.3px;width:20.5px;height:20.7px;background:#e4e7eb;border-radius:5px"></div><svg style="position:absolute;left:229px;top:1034.7px" width="16" height="16" viewBox="0 0 16 16"><path d="M13.76 8.00 L13.55 9.55 L15.56 10.63 L14.06 13.23 L12.12 12.03 L10.88 12.99 L9.43 13.58 L9.50 15.86 L6.50 15.86 L6.57 13.58 L5.12 12.99 L3.88 12.03 L1.94 13.23 L0.44 10.63 L2.45 9.55 L2.24 8.00 L2.45 6.45 L0.44 5.37 L1.94 2.77 L3.88 3.97 L5.12 3.01 L6.57 2.42 L6.50 0.14 L9.50 0.14 L9.43 2.42 L10.88 3.01 L12.12 3.97 L14.06 2.77 L15.56 5.37 L13.55 6.45Z" fill="#e2e6ee"/><circle cx="8.0" cy="8.0" r="2.88" fill="#fefefd"/></svg><svg style="position:absolute;left:273.5px;top:1036.0px" width="15" height="14" viewBox="0 0 15 14"><path d="M6 6 L12.2 11.8" stroke="#dde2ea" stroke-width="2.3" stroke-linecap="round"/><circle cx="4.6" cy="4.6" r="3.6" fill="#dde2ea"/><path d="M0 2.6 L2.6 0 L5.2 2.6 L2.6 5.2Z" fill="#fefefd"/></svg><div style="position:absolute;top:1037.08px;font-size:14.5px;line-height:17.4px;color:#5e6066;font-weight:400;letter-spacing:0.3px;white-space:nowrap;left:299.5px;width:24px;text-align:center;">15</div><div style="position:absolute;left:328px;top:1028.5px;width:262px;height:33px;overflow:hidden"><div style="position:absolute;top:8.67px;font-size:14.4px;line-height:17.28px;color:#727378;font-weight:400;letter-spacing:0.9px;white-space:nowrap;left:49px;">40520 Permit Reimbursement Income</div></div><div style="position:absolute;top:1037.75px;font-size:14px;line-height:16.8px;color:#85868b;font-weight:400;letter-spacing:0.95px;white-space:nowrap;left:592.0px;width:120px;text-align:right;">0</div><div style="position:absolute;top:1037.75px;font-size:14px;line-height:16.8px;color:#85868b;font-weight:400;letter-spacing:0.95px;white-space:nowrap;left:723.5px;width:120px;text-align:right;">0</div><div style="position:absolute;top:1037.75px;font-size:14px;line-height:16.8px;color:#85868b;font-weight:400;letter-spacing:0.95px;white-space:nowrap;left:855.0px;width:120px;text-align:right;">0</div><div style="position:absolute;top:1037.75px;font-size:14px;line-height:16.8px;color:#85868b;font-weight:400;letter-spacing:0.95px;white-space:nowrap;left:986.5px;width:120px;text-align:right;">0</div><div style="position:absolute;top:1037.75px;font-size:14px;line-height:16.8px;color:#85868b;font-weight:400;letter-spacing:0.95px;white-space:nowrap;left:1118.0px;width:120px;text-align:right;">0</div><div style="position:absolute;top:1037.75px;font-size:14px;line-height:16.8px;color:#85868b;font-weight:400;letter-spacing:0.95px;white-space:nowrap;left:1249.5px;width:120px;text-align:right;">0</div><div style="position:absolute;top:1037.75px;font-size:14px;line-height:16.8px;color:#85868b;font-weight:400;letter-spacing:0.95px;white-space:nowrap;left:1381.0px;width:120px;text-align:right;">239</div><div style="position:absolute;top:1037.75px;font-size:14px;line-height:16.8px;color:#85868b;font-weight:400;letter-spacing:0.95px;white-space:nowrap;left:1512.5px;width:120px;text-align:right;">0</div><div style="position:absolute;top:1037.75px;font-size:14px;line-height:16.8px;color:#85868b;font-weight:400;letter-spacing:0.95px;white-space:nowrap;left:1644.0px;width:120px;text-align:right;">0</div><div style="position:absolute;top:1037.75px;font-size:14px;line-height:16.8px;color:#85868b;font-weight:400;letter-spacing:0.95px;white-space:nowrap;left:1775.5px;width:120px;text-align:right;">473</div><div style="position:absolute;left:202px;top:1069.7px;width:20.5px;height:20.7px;background:#e4e7eb;border-radius:5px"></div><svg style="position:absolute;left:229px;top:1068.1000000000001px" width="16" height="16" viewBox="0 0 16 16"><path d="M13.76 8.00 L13.55 9.55 L15.56 10.63 L14.06 13.23 L12.12 12.03 L10.88 12.99 L9.43 13.58 L9.50 15.86 L6.50 15.86 L6.57 13.58 L5.12 12.99 L3.88 12.03 L1.94 13.23 L0.44 10.63 L2.45 9.55 L2.24 8.00 L2.45 6.45 L0.44 5.37 L1.94 2.77 L3.88 3.97 L5.12 3.01 L6.57 2.42 L6.50 0.14 L9.50 0.14 L9.43 2.42 L10.88 3.01 L12.12 3.97 L14.06 2.77 L15.56 5.37 L13.55 6.45Z" fill="#e2e6ee"/><circle cx="8.0" cy="8.0" r="2.88" fill="#fefefd"/></svg><svg style="position:absolute;left:273.5px;top:1069.4px" width="15" height="14" viewBox="0 0 15 14"><path d="M6 6 L12.2 11.8" stroke="#dde2ea" stroke-width="2.3" stroke-linecap="round"/><circle cx="4.6" cy="4.6" r="3.6" fill="#dde2ea"/><path d="M0 2.6 L2.6 0 L5.2 2.6 L2.6 5.2Z" fill="#fefefd"/></svg><div style="position:absolute;top:1070.48px;font-size:14.5px;line-height:17.4px;color:#5e6066;font-weight:400;letter-spacing:0.3px;white-space:nowrap;left:299.5px;width:24px;text-align:center;">16</div><div style="position:absolute;left:328px;top:1061.9px;width:262px;height:33px;overflow:hidden"><div style="position:absolute;top:8.67px;font-size:14.4px;line-height:17.28px;color:#727378;font-weight:400;letter-spacing:0.9px;white-space:nowrap;left:49px;">40530 Reimbursed Freight &amp; Delivery</div></div><div style="position:absolute;top:1071.15px;font-size:14px;line-height:16.8px;color:#85868b;font-weight:400;letter-spacing:0.95px;white-space:nowrap;left:592.0px;width:120px;text-align:right;">0</div><div style="position:absolute;top:1071.15px;font-size:14px;line-height:16.8px;color:#85868b;font-weight:400;letter-spacing:0.95px;white-space:nowrap;left:723.5px;width:120px;text-align:right;">0</div><div style="position:absolute;top:1071.15px;font-size:14px;line-height:16.8px;color:#85868b;font-weight:400;letter-spacing:0.95px;white-space:nowrap;left:855.0px;width:120px;text-align:right;">0</div><div style="position:absolute;top:1071.15px;font-size:14px;line-height:16.8px;color:#85868b;font-weight:400;letter-spacing:0.95px;white-space:nowrap;left:986.5px;width:120px;text-align:right;">0</div><div style="position:absolute;top:1071.15px;font-size:14px;line-height:16.8px;color:#85868b;font-weight:400;letter-spacing:0.95px;white-space:nowrap;left:1118.0px;width:120px;text-align:right;">0</div><div style="position:absolute;top:1071.15px;font-size:14px;line-height:16.8px;color:#85868b;font-weight:400;letter-spacing:0.95px;white-space:nowrap;left:1249.5px;width:120px;text-align:right;">0</div><div style="position:absolute;top:1071.15px;font-size:14px;line-height:16.8px;color:#85868b;font-weight:400;letter-spacing:0.95px;white-space:nowrap;left:1381.0px;width:120px;text-align:right;">0</div><div style="position:absolute;top:1071.15px;font-size:14px;line-height:16.8px;color:#85868b;font-weight:400;letter-spacing:0.95px;white-space:nowrap;left:1512.5px;width:120px;text-align:right;">0</div><div style="position:absolute;top:1071.15px;font-size:14px;line-height:16.8px;color:#85868b;font-weight:400;letter-spacing:0.95px;white-space:nowrap;left:1644.0px;width:120px;text-align:right;">0</div><div style="position:absolute;top:1071.15px;font-size:14px;line-height:16.8px;color:#85868b;font-weight:400;letter-spacing:0.95px;white-space:nowrap;left:1775.5px;width:120px;text-align:right;">0</div><div style="position:absolute;left:589.2px;top:567.8px;width:1.6px;height:513px;background:#e9e9eb"></div><div style="position:absolute;left:720.7px;top:567.8px;width:1.6px;height:513px;background:#e9e9eb"></div><div style="position:absolute;left:852.2px;top:567.8px;width:1.6px;height:513px;background:#e9e9eb"></div><div style="position:absolute;left:983.7px;top:567.8px;width:1.6px;height:513px;background:#e9e9eb"></div><div style="position:absolute;left:1115.2px;top:567.8px;width:1.6px;height:513px;background:#e9e9eb"></div><div style="position:absolute;left:1246.7px;top:567.8px;width:1.6px;height:513px;background:#e9e9eb"></div><div style="position:absolute;left:1378.2px;top:567.8px;width:1.6px;height:513px;background:#e9e9eb"></div><div style="position:absolute;left:1509.7px;top:567.8px;width:1.6px;height:513px;background:#e9e9eb"></div><div style="position:absolute;left:1641.2px;top:567.8px;width:1.6px;height:513px;background:#e9e9eb"></div><div style="position:absolute;left:1772.7px;top:567.8px;width:1.6px;height:513px;background:#e9e9eb"></div><div style="position:absolute;left:1904.2px;top:567.8px;width:1.6px;height:513px;background:#e9e9eb"></div><div style="position:absolute;left:192px;top:596.1999999999999px;width:1728px;height:1.4px;background:#e6e6e9"></div><div style="position:absolute;left:192px;top:629.3px;width:1728px;height:1.4px;background:#e6e6e9"></div><div style="position:absolute;left:192px;top:662.8px;width:1728px;height:1.4px;background:#e6e6e9"></div><div style="position:absolute;left:192px;top:695.9px;width:1728px;height:1.4px;background:#e6e6e9"></div><div style="position:absolute;left:192px;top:730.3px;width:1728px;height:1.4px;background:#e6e6e9"></div><div style="position:absolute;left:192px;top:762.6999999999999px;width:1728px;height:1.4px;background:#e6e6e9"></div><div style="position:absolute;left:192px;top:796.0px;width:1728px;height:1.4px;background:#e6e6e9"></div><div style="position:absolute;left:192px;top:829.1999999999999px;width:1728px;height:1.4px;background:#e6e6e9"></div><div style="position:absolute;left:192px;top:862.5999999999999px;width:1728px;height:1.4px;background:#e6e6e9"></div><div style="position:absolute;left:192px;top:896.3px;width:1728px;height:1.4px;background:#e6e6e9"></div><div style="position:absolute;left:192px;top:930.5999999999999px;width:1728px;height:1.4px;background:#e6e6e9"></div><div style="position:absolute;left:192px;top:961.0px;width:1728px;height:1.4px;background:#e6e6e9"></div><div style="position:absolute;left:192px;top:994.4px;width:1728px;height:1.4px;background:#e6e6e9"></div><div style="position:absolute;left:192px;top:1027.8px;width:1728px;height:1.4px;background:#e6e6e9"></div><div style="position:absolute;left:192px;top:1061.2px;width:1728px;height:1.4px;background:#e6e6e9"></div><div style="position:absolute;left:192px;top:1094.3px;width:1728px;height:1.4px;background:#e6e6e9"></div><div style="position:absolute;left:328px;top:729.1px;width:1592px;height:3.5px;background:linear-gradient(#e8e8ea,#d8d8da)"></div><div style="position:absolute;left:328px;top:929.4px;width:1592px;height:3.5px;background:linear-gradient(#e8e8ea,#d8d8da)"></div><svg style="position:absolute;left:304px;top:551px" width="40" height="42" viewBox="0 0 40 42"><path d="M13 21 V5 Q13 2 17.5 2 Q22 2 22 5 V14 Q24 12.5 26.5 14 Q29 13 31 15.5 Q34 15 35.5 18 L36 28 Q36 34 32 39 H18 Q15 37 12 33 L4.5 25.5 Q3 23 5.5 22 Q8 21 10 23 L13 26Z" fill="#2b3442" stroke="#c9ced6" stroke-width="1.4"/></svg>
</body></html>
